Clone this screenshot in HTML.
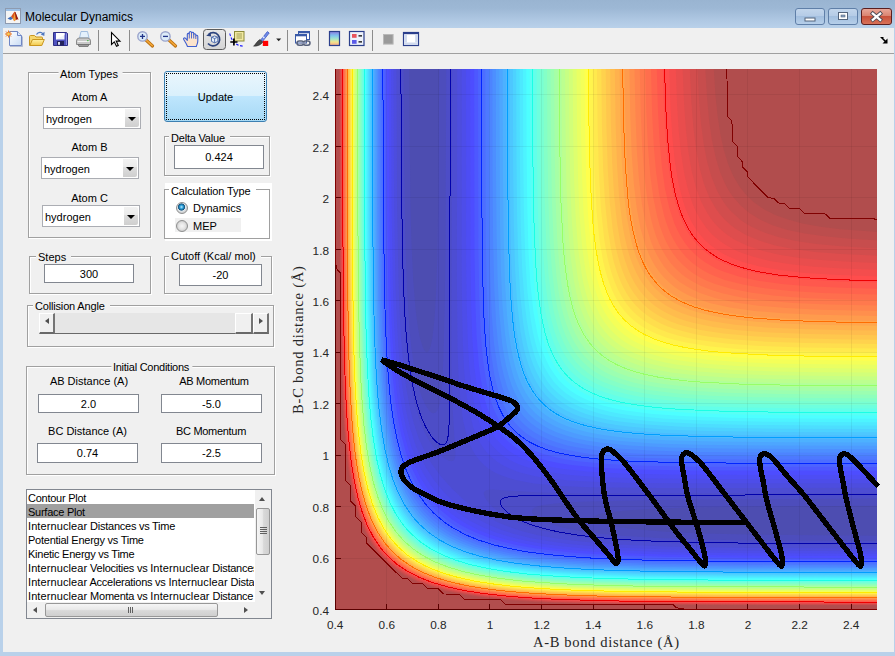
<!DOCTYPE html>
<html><head><meta charset="utf-8"><title>Molecular Dynamics</title>
<style>
html,body{margin:0;padding:0;}
body{width:895px;height:656px;overflow:hidden;position:relative;background:#f0f0f0;font-family:"Liberation Sans",sans-serif;font-size:11px;color:#000;}
.abs{position:absolute;}
#titlebar{left:0;top:0;width:895px;height:28px;background:linear-gradient(#99b4d1 0%,#9db8d5 30%,#b0c9e4 75%,#b9d1ea 100%);}
#title{left:25px;top:9px;font-size:12px;line-height:16px;color:#000;font-family:"Liberation Sans",sans-serif;}
#bl{left:0;top:28px;width:3px;height:628px;background:#b9d1ea;}
#br{left:894px;top:28px;width:1px;height:628px;background:#b9d1ea;}
#bb{left:0;top:652px;width:895px;height:4px;background:#b9d1ea;}
#toolbar{left:3px;top:28px;width:891px;height:25px;background:#f0f0f0;border-bottom:1px solid #a0a0a0;}
.panel{position:absolute;border:1px solid #fff;box-sizing:border-box;}
.panel:before{content:"";position:absolute;left:-2px;top:-2px;right:0;bottom:0;border:1px solid #a0a0a0;}
.ptitle{position:absolute;top:-6px;background:#f0f0f0;padding:0 5px 0 2px;line-height:13px;white-space:nowrap;}
.edit{position:absolute;box-sizing:border-box;border:1px solid #828790;background:#fff;text-align:center;}
.lbl{position:absolute;white-space:nowrap;transform:translateX(-50%);line-height:13px;}
.pop{position:absolute;box-sizing:border-box;border:1px solid #abadb3;background:#fff;}
.pop span{position:absolute;left:2px;top:5px;line-height:13px;}
.pop i{position:absolute;right:1px;top:1px;bottom:1px;width:14px;border-radius:0 2px 2px 0;background:linear-gradient(#f2f2f2 0%,#ebebeb 45%,#dddddd 46%,#cfcfcf 100%);}
.pop i:after{content:"";position:absolute;left:3px;top:8px;border:4px solid transparent;border-top:4.5px solid #000;border-bottom:0;}

#upd{left:164px;top:71px;width:103px;height:51px;box-sizing:border-box;border:1px solid #3c7fb1;border-radius:3px;background:linear-gradient(#eaf6fd 0%,#d9f0fc 49%,#bee6fd 50%,#a7d9f5 100%);text-align:center;line-height:50px;}
#upd:after{content:"";position:absolute;left:1px;top:1px;right:1px;bottom:1px;border:1px dotted #000;}
.radio{position:absolute;width:12px;height:12px;box-sizing:border-box;border:1px solid #8e8f8f;border-radius:50%;background:radial-gradient(circle at 50% 50%,#f6f6f6 0,#e4e4e4 45%,#cfcfcf 70%);}
.radio.on{background:radial-gradient(circle at 45% 40%,#bfeaff 0,#2a9fd8 22%,#16507a 40%,#dfe8ee 48%,#d0d0d0 70%);}

#slider{left:39px;top:313px;width:230px;height:21px;background:#e6e6e6;border-bottom:1px solid #696969;box-sizing:border-box;}
#slider b{position:absolute;top:0;height:21px;box-sizing:border-box;background:#f0f0f0;border-left:1px solid #fff;border-top:1px solid #fff;border-right:2px solid #747474;border-bottom:2px solid #696969;}
#slider .sl{left:0;width:16px;} #slider .sr{left:214px;width:16px;} #slider .th{left:196px;width:18px;}
#slider .sl:after{content:"";position:absolute;left:4.5px;top:4px;border:3.7px solid transparent;border-right:4.5px solid #505050;border-left:0;}
#slider .sr:after{content:"";position:absolute;left:5px;top:4px;border:3.7px solid transparent;border-left:4.5px solid #505050;border-right:0;}

#list{left:26px;top:489px;width:246px;height:130px;box-sizing:border-box;border:1px solid #828790;background:#fff;overflow:hidden;}
#items{position:absolute;left:0;top:0px;width:227px;height:112px;overflow:hidden;letter-spacing:-0.25px;}
.it{height:14px;line-height:16px;padding-left:1px;white-space:nowrap;overflow:hidden;}
.it.sel{background:#a0a0a0;}
#vs{position:absolute;left:228px;top:0;width:16px;height:112px;background:#f0f0f0;}
#hs{position:absolute;left:0;top:112px;width:244px;height:16px;background:#f0f0f0;}
#vs .vth{position:absolute;left:0.5px;top:18px;width:14px;height:47px;box-sizing:border-box;border:1px solid #979797;border-radius:2px;background:linear-gradient(90deg,#f5f5f5 0%,#e9e9e9 45%,#d9d9d9 55%,#cfcfcf 100%);}
#vs .vth:after{content:"";position:absolute;left:3px;top:18px;width:7px;height:1px;background:#606060;box-shadow:0 2px 0 #606060,0 4px 0 #606060,0 6px 0 #606060;}
#vs .up{position:absolute;left:4px;top:7px;border:3.5px solid transparent;border-bottom:4px solid #505050;border-top:0;}
#vs .dn{position:absolute;left:4px;top:101px;border:3.5px solid transparent;border-top:4px solid #505050;border-bottom:0;}
#hs .hth{position:absolute;left:18px;top:1px;width:173px;height:14px;box-sizing:border-box;border:1px solid #979797;border-radius:2px;background:linear-gradient(#f5f5f5 0%,#e9e9e9 45%,#d9d9d9 55%,#cfcfcf 100%);}
#hs .hth:after{content:"";position:absolute;left:82px;top:3px;width:1px;height:6px;background:#606060;box-shadow:2px 0 0 #606060,4px 0 0 #606060;}
#hs .lf{position:absolute;left:6px;top:4.5px;border:3.5px solid transparent;border-right:4px solid #505050;border-left:0;}
#hs .rt{position:absolute;left:217px;top:4.5px;border:3.5px solid transparent;border-left:4px solid #505050;border-right:0;}
</style></head><body>
<div id="titlebar" class="abs"></div>
<div id="title" class="abs">Molecular Dynamics</div>
<div id="bl" class="abs"></div><div id="br" class="abs"></div><div id="bb" class="abs"></div>
<div id="toolbar" class="abs"></div>
<svg class="abs" style="left:0;top:0" width="895" height="56" viewBox="0 0 895 56">
<defs>
<linearGradient id="gpaper" x1="0" y1="0" x2="1" y2="1"><stop offset="0" stop-color="#fff"/><stop offset="1" stop-color="#c9dcf5"/></linearGradient>
<linearGradient id="gfold" x1="0" y1="0" x2="0" y2="1"><stop offset="0" stop-color="#fff2a8"/><stop offset="1" stop-color="#f2c84a"/></linearGradient>
<linearGradient id="gcb" x1="0" y1="0" x2="0" y2="1"><stop offset="0" stop-color="#8a7be0"/><stop offset="0.3" stop-color="#7fc4ee"/><stop offset="0.55" stop-color="#a8e6c8"/><stop offset="0.75" stop-color="#f3e58a"/><stop offset="1" stop-color="#f0a08a"/></linearGradient>
<linearGradient id="gbtn" x1="0" y1="0" x2="0" y2="1"><stop offset="0" stop-color="#e8e8e8"/><stop offset="1" stop-color="#d4d4d4"/></linearGradient>
<linearGradient id="gmin" x1="0" y1="0" x2="0" y2="1"><stop offset="0" stop-color="#c3d6ec"/><stop offset="0.5" stop-color="#b4cbe6"/><stop offset="0.5" stop-color="#a3bfdf"/><stop offset="1" stop-color="#b7d0ea"/></linearGradient>
<linearGradient id="gcls" x1="0" y1="0" x2="0" y2="1"><stop offset="0" stop-color="#e9a99b"/><stop offset="0.5" stop-color="#d9806c"/><stop offset="0.5" stop-color="#c8513a"/><stop offset="1" stop-color="#d9735a"/></linearGradient>
</defs>
<!-- window buttons -->
<g>
<rect x="795.5" y="8.5" width="29" height="16" rx="2.5" fill="url(#gmin)" stroke="#5f7fa8"/>
<rect x="805" y="18" width="10" height="3" fill="#fff" stroke="#53647c" stroke-width="1"/>
<rect x="828.5" y="8.5" width="29" height="16" rx="2.5" fill="url(#gmin)" stroke="#5f7fa8"/>
<rect x="838.5" y="12.5" width="9" height="7" fill="#fff" stroke="#53647c" stroke-width="1"/>
<rect x="841" y="15" width="4" height="2" fill="#8aa3c4" stroke="#53647c" stroke-width="0.6"/>
<rect x="861.5" y="8.5" width="30" height="16" rx="2.5" fill="url(#gcls)" stroke="#5a1f1f"/>
<path d="M872.8,13.6L880.2,19.8M880.2,13.6L872.8,19.8" stroke="#4a4a55" stroke-width="4" stroke-linecap="square"/>
<path d="M872.8,13.6L880.2,19.8M880.2,13.6L872.8,19.8" stroke="#fff" stroke-width="2.3" stroke-linecap="square"/>
</g>
<!-- matlab logo icon -->
<g>
<rect x="5.5" y="8.5" width="15" height="15" fill="#f4f4f4" stroke="#8e9bb0"/>
<rect x="6" y="9" width="14" height="2" fill="#9cc0e6"/>
<path d="M7.5,18.5L11,16.5L13,18.8L10.5,20Z" fill="#3a6ab8"/>
<path d="M11,16.5C13,14.5 13.8,11.8 14.8,11.8C15.8,11.8 16.8,16.5 18.5,19.5C17,18.8 16,19.5 14.2,21.2C13.6,20.2 13.3,19.4 13,18.8Z" fill="#d9541e"/>
<path d="M14.8,11.8C15.8,11.8 16.8,16.5 18.5,19.5C17.3,18.9 16.6,19.2 15.8,19.8C15.6,17 15.3,14 14.8,11.8Z" fill="#8e1b12"/>
<path d="M13,18.8C13.6,17.6 14.3,15 14.8,13C15.1,15.5 15.4,18 15.8,19.8L14.2,21.2Z" fill="#f2a13a"/>
</g>
<!-- new -->
<path d="M9.5,31.5H17.5L21.5,35.5V45.5H9.5Z" fill="url(#gpaper)" stroke="#6f86c4"/>
<path d="M17.5,31.5V35.5H21.5" fill="#dfe9fa" stroke="#6f86c4"/>
<path d="M10,46.5H22.5V36.5" fill="none" stroke="#9aa6c6" stroke-opacity="0.7"/>
<g stroke="#e8772a" stroke-width="1"><path d="M8.5,30.5V37.5M5,34H12M6,31.5L11,36.5M11,31.5L6,36.5"/></g>
<circle cx="8.5" cy="34" r="1.8" fill="#f6d35a" stroke="#e8772a" stroke-width="0.8"/>
<!-- open -->
<path d="M29.5,45.5V36.5Q29.5,35.5 30.5,35.5H34.5L36,37H41.5Q42.5,37 42.5,38V39.5" fill="#f6d66c" stroke="#c9961f"/>
<path d="M29.8,45.5L32.5,39.5H44.3L41.8,45.5Z" fill="url(#gfold)" stroke="#c9961f"/>
<path d="M36.5,34.5C38,32 41.5,31.5 43,34" fill="none" stroke="#4f78c0" stroke-width="1.3"/>
<path d="M44.6,31.8L44.3,36L40.8,34.6Z" fill="#4f78c0"/>
<!-- save -->
<path d="M53.5,32.5H66.5L67.5,33.5V45.5H53.5Z" fill="#4f53c0" stroke="#2f2f86"/>
<rect x="56" y="33" width="8.5" height="6.5" fill="#eef2fb"/>
<path d="M56,33H64.5V35L56,39.5Z" fill="#fff"/>
<rect x="57" y="41" width="7" height="4.5" fill="#23235c"/>
<rect x="58" y="42" width="2" height="2.8" fill="#d8dcf0"/>
<path d="M66.5,33.5V45" stroke="#8a8ee0" stroke-width="1"/>
<!-- print -->
<path d="M79.5,38L81,31.5H87.5L89,38Z" fill="#e4f0fb" stroke="#8fb0d8" stroke-width="0.8"/>
<path d="M76.5,41Q76.5,38.5 79,38H88Q90.5,38.5 90.5,41V44.5H76.5Z" fill="#c9c9c9" stroke="#8a8a8a"/>
<path d="M77.5,41.5H89.5" stroke="#f4f4f4"/>
<path d="M78,44.5H89L88,46.5H79Z" fill="#9a9a9a" stroke="#6e6e6e" stroke-width="0.8"/>
<rect x="87" y="40" width="1.6" height="1.2" fill="#5cb85c"/>
<!-- separators -->
<g stroke="#8c8c8c" stroke-width="1" shape-rendering="crispEdges"><path d="M98.5,30V51M129.5,30V51M287.5,30V51M318.5,30V51M372.5,30V51"/></g>
<!-- pointer -->
<path d="M111.5,32.5V44.5L114.3,41.8L116.5,46.3L118.3,45.4L116.2,41.1H120Z" fill="#fff" stroke="#000" stroke-width="1.1" stroke-linejoin="miter"/>
<!-- zoom in -->
<path d="M146,40L152.5,46" stroke="#b96f10" stroke-width="3.2" stroke-linecap="round"/>
<path d="M146,40L152.3,45.7" stroke="#f3a638" stroke-width="1.6" stroke-linecap="round"/>
<circle cx="142.5" cy="36.4" r="4.7" fill="#dcebf8" stroke="#9aa4cc" stroke-width="1.4"/>
<path d="M140,36.4H145M142.5,33.9V38.9" stroke="#23358a" stroke-width="1.3"/>
<!-- zoom out -->
<path d="M169,40L175.5,46" stroke="#b96f10" stroke-width="3.2" stroke-linecap="round"/>
<path d="M169,40L175.3,45.7" stroke="#f3a638" stroke-width="1.6" stroke-linecap="round"/>
<circle cx="165.4" cy="36.4" r="4.7" fill="#dcebf8" stroke="#9aa4cc" stroke-width="1.4"/>
<path d="M163,36.4H168" stroke="#23358a" stroke-width="1.3"/>
<!-- hand -->
<path d="M187.5,46.5C186.5,43.5 184.5,41 183.6,39.2C183.2,38 184.6,37.4 185.6,38.4L187.3,40.3V34.3C187.3,33 189.2,33 189.3,34.3V32.6C189.4,31.2 191.4,31.2 191.5,32.6V33.2C191.6,31.9 193.6,31.9 193.7,33.2V34.6C193.8,33.4 195.7,33.4 195.8,34.7V36C195.9,35 197.8,35 197.8,36.4V41C197.8,43.5 196.8,44.5 196.3,46.5Z" fill="#fbe3cc" stroke="#3f5fd0" stroke-width="1.1" stroke-linejoin="round"/>
<path d="M189.3,34.3V38.5M191.5,33.2V38.5M193.7,34.6V38.5M195.8,36V39" stroke="#3f5fd0" stroke-width="0.9" fill="none"/>
<!-- rotate (pressed) -->
<rect x="203.5" y="29.5" width="22" height="20" rx="3" fill="url(#gbtn)" stroke="#5c5c5c"/>
<path d="M208.8,34.2A6.6,6.6 0 1 1 208,43.5" fill="none" stroke="#2d447f" stroke-width="1.7"/>
<path d="M206.2,35.8L210.6,32.2L211.2,36.6Z" fill="#2d447f"/>
<path d="M211.5,37.2L214.5,36L217.8,37.2V41.4L214.6,42.8L211.5,41.4Z" fill="#e6f0fb" stroke="#4a66a8" stroke-width="0.9"/>
<path d="M211.5,37.2L214.6,38.5L217.8,37.2M214.6,38.5V42.8" fill="none" stroke="#4a66a8" stroke-width="0.9"/>
<!-- data cursor -->
<rect x="234.5" y="31.5" width="9.5" height="9.5" fill="#f0e8a0" stroke="#8c8a3a"/>
<path d="M236.5,34H242M236.5,36H242M236.5,38H242" stroke="#9a9850" stroke-width="0.9"/>
<path d="M229.8,33.5C230.5,37 232,40 234,42.2C236.5,44.8 240,46 244,46.2" fill="none" stroke="#1a1aff" stroke-width="1.1" stroke-dasharray="2.6,1.6"/>
<path d="M230.3,42H237.5M233.9,38.4V45.6" stroke="#000" stroke-width="1.7"/>
<!-- brush -->
<path d="M260.5,40.2L267.4,31.6L269.2,33L262.4,41.6Z" fill="#6f8be8" stroke="#3b55c0" stroke-width="0.8"/>
<path d="M262.6,36.5L264.4,38" stroke="#e9eefc" stroke-width="1.2"/>
<path d="M259.8,39.6L262.8,42C261.5,44.5 258,46.3 253.6,46.2C255.6,44.6 256.6,41.5 259.8,39.6Z" fill="#4a4a4a" stroke="#2a2a2a" stroke-width="0.6"/>
<rect x="262.8" y="40.8" width="5.4" height="5.2" fill="#f00"/>
<path d="M276.2,38.5H281.2L278.7,41.2Z" fill="#222"/>
<!-- link -->
<rect x="298.5" y="31.5" width="11" height="8" fill="#fff" stroke="#3a5aa8"/>
<path d="M298.5,32.5H309.5" stroke="#3a5aa8" stroke-width="1.6"/>
<rect x="295.5" y="34.5" width="11" height="8.5" fill="#fff" stroke="#3a5aa8"/>
<path d="M295.5,35.5H306.5" stroke="#3a5aa8" stroke-width="1.6"/>
<rect x="297" y="41" width="6.6" height="4.2" rx="2.1" fill="none" stroke="#56607a" stroke-width="1.5"/>
<rect x="303.4" y="41" width="6.6" height="4.2" rx="2.1" fill="none" stroke="#56607a" stroke-width="1.5"/>
<path d="M300.5,43.1H306.5" stroke="#8e98b4" stroke-width="1.4"/>
<!-- colorbar -->
<rect x="329.5" y="31.5" width="10" height="14" fill="url(#gcb)" stroke="#2b3f8c" stroke-width="1.2"/>
<!-- legend -->
<rect x="349.5" y="31.5" width="14.5" height="14" fill="#eef2fb" stroke="#2b3f8c" stroke-width="1.2"/>
<rect x="352" y="34" width="4.6" height="3.8" fill="#e8545c"/>
<rect x="352" y="40" width="4.6" height="3.8" fill="#5a5ae8"/>
<path d="M358.5,35.8H362M358.5,41.8H362" stroke="#000" stroke-width="1.2"/>
<!-- hide tools -->
<rect x="383.5" y="34.5" width="9.6" height="9.6" fill="#9a9a9a" stroke="#b9b9b9"/>
<!-- show tools -->
<rect x="403.5" y="32.5" width="15" height="13" fill="#fff" stroke="#2b3f8c" stroke-width="1.2"/>
<path d="M403.5,33.3H418.5" stroke="#2b3f8c" stroke-width="1.8"/>
<rect x="404.3" y="34.5" width="2.6" height="8" fill="#cfd9ee"/><rect x="415.2" y="34.5" width="2.6" height="8" fill="#cfd9ee"/>
<rect x="404.3" y="42.5" width="13.5" height="2.4" fill="#cfd9ee"/>
<!-- dock arrow -->
<path d="M881.5,37.5L886.5,42.5" stroke="#000" stroke-width="1.6"/><path d="M887.5,38.5V43.5H882.5Z" fill="#000"/>
<path d="M880.5,37.5H883.5" stroke="#000" stroke-width="1"/>
</svg>

<div class="panel" style="left:29px;top:73px;width:123px;height:166px"><div class="ptitle" style="top:-6px;left:50%;transform:translateX(-50%)">Atom Types</div></div>
<div class="lbl" style="left:89.5px;top:91px">Atom A</div>
<div class="pop" style="left:43px;top:107px;width:98px;height:22px"><span>hydrogen</span><i></i></div>
<div class="lbl" style="left:89.5px;top:141px">Atom B</div>
<div class="pop" style="left:41px;top:157px;width:98px;height:22px"><span>hydrogen</span><i></i></div>
<div class="lbl" style="left:89.5px;top:192px">Atom C</div>
<div class="pop" style="left:42px;top:205px;width:98px;height:22px"><span>hydrogen</span><i></i></div>
<div id="upd" class="abs">Update</div>
<div class="panel" style="left:165px;top:137px;width:106px;height:40px"><div class="ptitle" style="top:-6px;left:3px;letter-spacing:-0.2px">Delta Value</div></div>
<div class="edit" style="left:174px;top:145px;width:90px;height:24px;line-height:23px">0.424</div>
<div class="abs" style="left:165px;top:183px;width:107px;height:58px;background:#fff"></div>
<div class="panel" style="left:165px;top:190px;width:106px;height:50px"><div class="ptitle" style="top:-6px;left:3px;background:#fff;letter-spacing:-0.1px">Calculation Type</div></div>
<div class="abs" style="left:175px;top:218px;width:66px;height:14px;background:#f0f0f0"></div>
<div class="radio on" style="left:176px;top:202px"></div><div class="abs" style="left:193px;top:202px;line-height:13px">Dynamics</div>
<div class="radio" style="left:176px;top:220px"></div><div class="abs" style="left:193px;top:220px;line-height:13px">MEP</div>
<div class="panel" style="left:30px;top:257px;width:122px;height:38px"><div class="ptitle" style="top:-7px;left:5px">Steps</div></div>
<div class="edit" style="left:44px;top:264px;width:90px;height:19px;line-height:18px">300</div>
<div class="panel" style="left:165px;top:257px;width:108px;height:38px"><div class="ptitle" style="top:-8px;left:3px">Cutoff (Kcal/ mol)</div></div>
<div class="edit" style="left:179px;top:264px;width:83px;height:22px;line-height:21px">-20</div>
<div class="panel" style="left:28px;top:306px;width:247px;height:42px"><div class="ptitle" style="top:-7px;left:4px;letter-spacing:-0.17px">Collision Angle</div></div>
<div id="slider" class="abs"><b class="sl"></b><b class="th"></b><b class="sr"></b></div>
<div class="panel" style="left:27px;top:367px;width:249px;height:109px"><div class="ptitle" style="top:-7px;left:50%;transform:translateX(-50%);letter-spacing:-0.25px;padding:0 3px 0 2px">Initial Conditions</div></div>
<div class="lbl" style="left:89.0px;top:375px">AB Distance (A)</div>
<div class="lbl" style="left:214.0px;top:375px;letter-spacing:-0.3px">AB Momentum</div>
<div class="edit" style="left:38px;top:394px;width:101px;height:19px;line-height:18px">2.0</div>
<div class="edit" style="left:161px;top:394px;width:101px;height:19px;line-height:18px">-5.0</div>
<div class="lbl" style="left:87.5px;top:425px">BC Distance (A)</div>
<div class="lbl" style="left:211.0px;top:425px;letter-spacing:-0.3px">BC Momentum</div>
<div class="edit" style="left:37px;top:443px;width:101px;height:20px;line-height:19px">0.74</div>
<div class="edit" style="left:161px;top:443px;width:101px;height:20px;line-height:19px">-2.5</div>
<div id="list" class="abs"><div id="items"><div class="it">Contour Plot</div><div class="it sel">Surface Plot</div><div class="it"><span style="letter-spacing:0.1px">Internuclear</span> Distances vs Time</div><div class="it">Potential Energy vs Time</div><div class="it">Kinetic Energy vs Time</div><div class="it"><span style="letter-spacing:0.1px">Internuclear</span> Velocities vs <span style="letter-spacing:0.1px">Internuclear</span> Distances</div><div class="it"><span style="letter-spacing:0.1px">Internuclear</span> Accelerations vs <span style="letter-spacing:0.1px">Internuclear</span> Distances</div><div class="it"><span style="letter-spacing:0.1px">Internuclear</span> Momenta vs <span style="letter-spacing:0.1px">Internuclear</span> Distance</div></div><div id="vs"><b class="up"></b><b class="vth"></b><b class="dn"></b></div><div id="hs"><b class="lf"></b><b class="hth"></b><b class="rt"></b></div></div>
<svg class="abs" style="left:0;top:0" width="895" height="656" viewBox="0 0 895 656">
<g fill-rule="evenodd" shape-rendering="geometricPrecision"><rect x="335.2" y="69" width="541.8" height="540.5" fill="#4d4db1"/>
<path fill="#4d4dbc" d="M335.2,609.5L877,609.5 877,535.7 746.7,534.5 704.1,533.5 665.4,531.7 637.1,529.4 622.9,527.7 611.8,525.9 606,524.6 597.8,522 595.2,520.7 593.6,519.4 593.1,518.1 593.6,516.8 595.8,515.4 599.6,514.1 607.4,512.5 625.9,510.4 652.5,508.8 687.4,507.6 737.7,506.7 877,505.8 877,69 439.2,69 438.2,208 437.3,258.2 436.1,292.9 434.5,319.5 432.4,338 430.8,345.7 429.5,349.5 428.1,351.7 426.8,352.3 425.5,351.7 424.2,350.1 422.9,347.6 420.3,339.4 419,333.5 417.2,322.5 415.5,308.4 413.2,280.1 411.4,241.4 410.3,199 409.2,69 335.2,69 335.2,609.5Z"/>
<path fill="#4d4dc7" d="M335.2,609.5L877,609.5 877,541.1 777.7,540.6 710.6,539.7 657.7,538 617.7,535.5 598.4,533.6 580.3,531 566.8,528.4 556.6,525.9 548.7,523.3 539.9,519.4 534.3,515.6 532.3,513 531.9,511.7 532.1,510.4 532.8,509.1 534.4,507.8 537.1,506.5 542.9,505 559.7,502.9 585.5,501.6 631.9,500.4 693.8,499.5 877,498.6 877,69 446.3,69 445.4,251.7 444.6,313.5 443.4,359.8 442,385.6 440,402.3 438.4,408.1 437.1,410.8 435.8,412.4 434.5,413.1 433.2,413.2 431.9,412.9 429.4,410.9 425.5,405.3 421.6,396.5 419,388.6 416.5,378.4 413.9,365 411.3,346.9 409.4,327.7 406.9,287.8 405.2,235 404.2,168.1 403.7,69 335.2,69 335.2,609.5Z"/>
<path fill="#4d4dd2" d="M335.2,609.5L877,609.5 877,545.2 753.2,544.5 675.8,543.2 646.1,542.1 619,540.7 594.7,538.7 576.4,536.6 556.8,533.6 539.3,529.7 526.4,525.9 513.5,520.7 501.8,514.3 493.4,507.8 489.5,504 486.5,500.1 484.4,496.3 483.8,493.7 483.9,492.4 484.7,491.1 486.1,490.3 488.7,489.7 492.6,489.5 539,492.5 584.2,493.6 877,492.9 877,69 452.1,69 451.4,361.1 452.5,406.2 455.4,452.5 455.3,456.4 454.7,458.9 453.9,460.3 452.6,461.1 451.3,461.3 448.7,460.7 444.8,458.6 441,455.6 437.1,451.7 430.7,443.3 424.2,431.7 419,418.8 415.2,405.9 411.3,388.5 408.2,368.8 406.1,350.6 404.2,326.4 402.7,299.4 401.7,269.8 400.3,192.5 399.7,69 335.2,69 335.2,609.5Z"/>
<path fill="#4d4dde" d="M335.2,609.5L877,609.5 877,548.5 750.6,547.9 673.2,546.7 616.4,544.4 591.9,542.6 573.9,540.8 554.5,538.2 536.7,534.9 521.3,531 509.5,527.1 497,522 484.9,515.6 473.5,507.8 464,500.1 451.8,488.5 441,476.5 431.9,464.2 425.5,453.3 419,439.1 413.9,423.8 410,408.5 406.3,388.2 403.6,367.2 401.3,341.8 399.7,314.9 398.5,282.6 397,202.8 396.4,69 335.2,69 335.2,609.5ZM588.7,487.2L660.3,488.1 877,487.8 877,69 457.2,69 456.9,281.3 457.6,352.1 458.8,380.4 460.7,403.6 463.3,421.6 467.2,437.1 469.5,443.5 472.5,449.9 475.8,455.5 479.7,460.6 483.5,464.5 488.7,468.7 493.9,471.9 500.3,475 508.1,477.8 515.8,480 533.9,483.4 557.1,485.7 588.7,487.2Z"/>
<path fill="#4d4de9" d="M335.2,609.5L877,609.5 877,551.3 749.3,550.8 670.6,549.6 613.8,547.5 590.6,546 568.4,543.9 548.9,541.3 530,537.9 513.2,533.7 500.8,529.7 488.3,524.6 475.9,518.1 464.2,510.4 454.6,502.7 443.6,491.8 434.5,480.8 426.8,469.1 420.3,456.8 415.2,444.3 410,427.7 406.1,411 402.6,389.4 400.2,368.8 398.3,347 396.8,319.9 395.5,286.5 394.1,204.1 393.5,69 335.2,69 335.2,609.5ZM599.9,482.1L633.2,482.9 677,483.3 877,483.2 877,69 461.8,69 461.7,265.9 462.1,309.7 462.8,341.8 464.1,370.1 466.3,393.3 469.4,412.6 473.5,428 476.5,435.8 479.7,442.1 483.5,448.2 487.4,453 492,457.6 497.7,462.1 504.2,466 510.6,469.1 518.4,471.9 526.1,474.1 535.1,476.2 545.5,477.9 568.7,480.4 599.9,482.1Z"/>
<path fill="#4d4df4" d="M335.2,609.5L877,609.5 877,553.8 746.7,553.3 666.7,552.2 608.7,550 585.5,548.5 563.2,546.4 543.5,543.9 524.8,540.5 509.4,536.8 495,532.3 482.3,527.1 469.8,520.7 458,513 448.7,505.4 439.6,496.3 430.7,485.2 422.9,473 416.5,459.9 411.3,446.4 406.4,429.3 402.6,411.3 399.7,392.7 397.2,370.1 395.5,348.3 394,321.2 392.9,287.8 391.6,205.4 391,69 335.2,69 335.2,609.5ZM636.3,478.2L709.3,478.9 877,478.9 877,69 466.1,69 466.2,259.5 466.7,304.5 467.7,339.2 469.4,368.8 472.1,392 473.9,402.3 475.9,411.3 478.1,419 481,426.8 484.7,434.5 488.6,440.9 492.6,446.1 497.7,451.3 502.9,455.5 509.4,459.7 517.1,463.5 524.8,466.5 533.9,469.1 544.2,471.4 567.4,474.7 597.1,476.9 636.3,478.2Z"/>
<path fill="#4d4dff" d="M335.2,609.5L877,609.5 877,556.1 742.8,555.6 662.9,554.5 604.8,552.4 580.3,550.8 559.7,548.9 540.3,546.4 521,543 504.2,539 490.9,534.9 478,529.7 465.4,523.3 455.2,516.7 444.9,508.4 435.4,498.8 426.8,487.7 420.1,476.9 413.9,464.1 408.6,449.9 403.6,431.9 399.7,412.7 397.1,395.2 394.7,372.7 393.1,350.8 391.7,323.8 390.5,290.3 389.3,208 388.7,69 335.2,69 335.2,609.5ZM668.6,474.4L737.7,474.8 877,474.8 877,69 470.2,69 470.5,256.9 471.1,303.2 472.3,338 474.4,367.6 477.5,390.7 479.6,401 481.9,410 484.5,417.8 487.9,425.5 492.2,433.2 496.4,439.2 501.6,444.8 507.6,449.9 514.5,454.5 521,457.8 530,461.5 539,464.2 548,466.3 559.7,468.4 586.8,471.5 621.6,473.4 668.6,474.4Z"/>
<path fill="#4d58ff" d="M335.2,609.5L877,609.5 877,558.2 746.7,557.7 664.2,556.7 602.2,554.5 576.4,552.9 557.1,551.1 536.4,548.5 517.2,545.2 500.9,541.3 488.2,537.4 475,532.3 462.2,525.9 452.1,519.4 442.3,511.6 433.2,502.6 424.3,491.1 417.8,480.5 411.3,467 406.1,452.9 401.4,435.8 397.8,417.8 394.8,397.2 392.5,375.3 390.7,350 389.4,323.5 388.3,290.3 387.1,205.4 386.6,69 335.2,69 335.2,609.5ZM690.3,470.5L877,470.8 877,69 474.2,69 474.5,253 475.3,300.6 476.6,335.4 478.9,365 480.6,377.9 482.6,389.4 484.9,399.7 487.4,408.1 490.6,416.5 493.9,423.3 498.4,430.6 502.9,436.4 508.1,441.6 514.5,446.7 521.9,451.2 530,455 539,458.3 548,460.8 559.7,463.2 571.3,465 599.6,467.8 638.4,469.6 690.3,470.5Z"/>
<path fill="#4d63ff" d="M335.2,609.5L877,609.5 877,560.1 740.3,559.6 657.7,558.6 598.4,556.5 573.9,554.9 552,552.9 531.9,550.3 513.2,547 497.7,543.3 482.8,538.7 470.1,533.6 457.8,527.2 447.8,520.7 438.4,513 429.4,503.6 421.6,493.5 414.8,482.1 408.7,469 403.6,454.4 399.6,439.6 395.8,421.2 392.7,399.7 390.7,380.1 388.8,354.7 387.4,326.4 386.4,294.2 385.2,210.6 384.7,69 335.2,69 335.2,609.5ZM696.7,466.7L877,467 877,69 478,69 478.4,250.5 479.2,296.8 480.6,331.5 483.1,361.1 486.7,384.3 489,394.6 491.7,403.6 494.7,411.3 498.4,419 502.9,426.3 508.1,432.7 513.2,437.7 519.7,442.7 527.4,447.4 535.1,451 544.2,454.2 554.5,457 566.1,459.4 577.7,461.2 607.4,464 644.8,465.7 696.7,466.7Z"/>
<path fill="#4d6eff" d="M335.2,609.5L877,609.5 877,561.9 741.5,561.5 657.7,560.4 595.8,558.3 571.3,556.7 550.6,554.9 530,552.3 511.1,549 495.2,545.3 481.9,541.3 468.7,536.1 456.5,530 445.9,523.3 436.4,515.6 426.8,505.6 419,495.3 412.6,484.4 406.3,470.5 401,455.1 397.1,440.1 393.3,420.3 390.7,401 388.5,379.1 386.8,354.5 385.5,326.9 384.5,292.9 383.4,208 382.9,69 335.2,69 335.2,609.5ZM692.5,462.8L758.3,463.2 877,463.3 877,69 481.7,69 482.2,245.3 483,291.6 484.5,326.4 487,356 490.5,379.1 492.9,389.4 495.5,398.4 498.4,406.2 502.1,413.9 506,420.3 510.8,426.8 515.8,432 522.2,437.4 529.8,442.2 537.6,446.1 546.8,449.5 555.8,452.2 566.1,454.6 577.7,456.6 590.6,458.2 606.1,459.7 643.5,461.7 692.5,462.8Z"/>
<path fill="#4d79ff" d="M335.2,609.5L877,609.5 877,563.6 739.4,563.2 655.1,562.1 595.8,560.1 571.3,558.6 549.3,556.7 528.4,554.2 510.6,551.2 495.1,547.7 478.4,542.7 465,537.4 452.6,531.1 442.7,524.6 433.3,516.8 424.7,507.8 417,497.5 410,485.4 404.5,473.1 399.7,459.2 395.6,443.5 392,425.1 389,403.6 386.8,381.9 385.2,358.6 383.9,331.5 382.9,298.1 381.7,210.6 381.2,69 335.2,69 335.2,609.5ZM684.5,458.9L753.2,459.6 877,459.7 877,69 485.3,69 485.8,240.2 486.7,286.5 488.2,321.2 490.7,350.8 494.2,374 496.5,384.3 499.1,393.3 502,401 505.5,408.6 509.4,415.3 514.5,422.3 520,428 526.1,433.2 532.6,437.4 540.3,441.5 548,444.6 557.1,447.5 567.4,450.1 577.7,452.1 590.6,453.9 604.8,455.5 639.6,457.7 684.5,458.9Z"/>
<path fill="#4d84ff" d="M335.2,609.5L877,609.5 877,565.2 736.4,564.8 652.5,563.7 593.2,561.7 568.7,560.2 545.5,558.2 524.8,555.6 508.5,552.9 491.3,549 477.1,544.8 464.2,539.8 451.7,533.6 441.6,527.1 431.9,519.3 422.9,509.9 415.2,499.6 408.7,488.5 402.4,474.4 397.3,458.9 393.2,442.9 389.8,424.2 387.2,404.9 385.2,384.3 383.4,358.6 381.2,298.1 380.1,213.1 379.6,69 335.2,69 335.2,609.5ZM676.1,455.1L746.7,455.9 877,456.2 877,69 488.9,69 489.4,235 490.3,280.1 491.7,314.8 494.1,344.4 497.5,367.6 499.7,377.9 502.2,386.9 504.8,394.6 508.2,402.3 512.4,410 516.9,416.5 522.2,422.5 527.4,427.2 533.9,431.9 540.5,435.8 548,439.2 557.1,442.5 567.4,445.4 577.7,447.6 602.2,451.1 634.5,453.6 676.1,455.1Z"/>
<path fill="#4d8fff" d="M335.2,609.5L877,609.5 877,566.7 736.4,566.3 652.5,565.3 589.3,563.2 566.1,561.7 544.2,559.8 523.5,557.3 505,554.2 488.7,550.5 475.2,546.4 461.8,541.3 450,535.4 439.1,528.4 429.7,520.7 421.1,511.7 413.4,501.4 406.7,489.8 401,476.9 395.8,461.6 392,446.3 388.3,426.8 385.6,406.2 383.4,383 381.8,358.6 379.6,298.1 378.6,213.1 378.1,69 335.2,69 335.2,609.5ZM767.5,452.5L877,452.7 877,69 492.4,69 492.6,177.1 493.1,241.4 494.3,289.1 496.2,323.8 497.6,339.2 499.4,353.4 501.6,365.9 504.1,376.6 507.2,386.9 510.6,395.7 514.5,403.3 518.8,410 523.9,416.5 530,422.4 536.4,427.3 544.2,431.9 552.6,435.8 562.2,439.2 573.9,442.3 586.4,444.8 599.6,446.7 613.8,448.2 650,450.5 697.7,451.9 767.5,452.5Z"/>
<path fill="#4d9bff" d="M335.2,609.5L877,609.5 877,568.1 736.4,567.7 651.2,566.7 588,564.7 563.7,563.2 542.9,561.4 522.2,558.9 502.9,555.6 486.1,551.8 472.6,547.7 459.3,542.6 447.4,536.6 437.1,529.9 428.1,522.5 420.1,514.3 412.3,504 405.5,492.4 399.7,479.5 394.5,464.3 390.7,449.2 386.9,429.3 384.2,409.4 382.1,386.9 380.4,361.2 378.2,300.6 377.1,214.4 376.7,69 335.2,69 335.2,609.5ZM719.8,448.6L877,449.2 877,69 495.9,69 496,170.7 496.6,233.7 497.6,278.8 499.3,313.5 502.1,343.1 503.9,354.7 506.1,366.3 508.8,376.6 511.7,385.6 515,393.3 519.1,401 523.5,407.7 528.8,413.9 535.1,419.8 541.6,424.5 549.3,428.9 557.1,432.4 566.1,435.6 576.4,438.4 588,440.8 599.6,442.6 629.3,445.6 668,447.6 719.8,448.6Z"/>
<path fill="#4da6ff" d="M335.2,609.5L877,609.5 877,569.5 736.4,569.1 651.2,568.2 589.3,566.2 563.5,564.7 542.9,562.9 522.7,560.6 504.2,557.6 488,554.2 471.9,549.6 459,544.7 446.8,538.7 436.6,532.3 426.8,524.4 418.2,515.6 410.5,505.3 403.8,493.7 398.4,481.7 393.3,466.7 389.3,451.2 385.6,431.9 382.8,411.3 380.7,389.4 379.1,364.9 377.8,336.2 376.8,301.9 375.7,215.7 375.3,69 335.2,69 335.2,609.5ZM697.9,444.8L764.8,445.5 877,445.8 877,69 499.3,69 500,226 500.9,271 502.5,305.8 505.2,335.4 508.8,358.6 511.3,368.8 513.9,377.9 516.8,385.6 520.4,393.3 524.8,400.7 529.9,407.5 535.1,412.9 540.9,417.8 546.8,421.8 554.5,426 563.5,429.8 572.6,432.8 582.9,435.4 593.2,437.5 606.1,439.4 620.3,441 653.8,443.4 697.9,444.8Z"/>
<path fill="#4db1ff" d="M335.2,609.5L877,609.5 877,570.8 736.4,570.4 651.2,569.5 588,567.5 562.2,566 541.6,564.3 520.5,561.9 502.9,559.1 485.9,555.5 470.6,551.1 457.8,546.3 444.9,540 434.5,533.4 425.2,525.9 416.5,516.8 408.8,506.5 402.3,495.2 397,483.4 392,468.6 388.1,453.7 384.2,433.3 381.4,412.6 379.3,390.7 377.8,367.3 376.5,338.9 375.5,303.2 374.4,215.7 374,69 335.2,69 335.2,609.5ZM783.4,442.2L877,442.4 877,69 502.7,69 502.9,172 503.6,235 504.9,281.3 507.1,316.1 508.7,331.5 510.5,344.4 512.9,357.3 515.4,367.6 518.8,377.9 522.2,386.1 526.1,393.4 531.3,401 536.9,407.5 542.9,412.9 549.7,417.8 558.4,422.5 567.4,426.3 576.5,429.3 588,432.2 599.8,434.5 612.5,436.3 628,437.9 665.4,440.3 713.2,441.6 783.4,442.2Z"/>
<path fill="#4dbcff" d="M335.2,609.5L877,609.5 877,572.1 733.8,571.7 648.7,570.8 585.5,568.8 559.7,567.3 539,565.5 518.4,563.1 499,560 482.3,556.2 466.8,551.6 453.5,546.4 442.3,540.7 431.9,534 422.9,526.6 413.9,516.9 406.5,506.5 400.1,495 394.6,482.1 389.6,466.7 385.9,451.2 382.8,434.5 380,412.6 377.8,389.4 376.3,366.3 375.1,338 374.2,303.2 373.1,215.7 372.7,69 335.2,69 335.2,609.5ZM729,438.3L877,439 877,69 506.1,69 506.3,165.5 506.9,226 508.1,271 509.9,304.5 512.8,332.8 514.6,344.4 516.9,356 519.6,366.3 522.7,375.3 526,383 530,390.3 534.6,397.2 540.2,403.6 545.8,408.7 552.8,413.9 559.7,417.8 568.7,421.9 577.7,425.1 588,427.9 599.6,430.3 611.3,432.2 640.9,435.2 678.3,437.2 729,438.3Z"/>
<path fill="#4dc7ff" d="M335.2,609.5L877,609.5 877,573.3 733.8,572.9 647.4,572 584.2,570 558.4,568.5 537.7,566.8 517.1,564.4 497.7,561.3 481,557.6 465.5,553 452,547.7 441,542.1 430.7,535.5 421.6,528 413.5,519.4 405.9,509.1 399.7,498.4 393.7,484.7 389,470.5 384.9,453.8 381.6,436.3 378.8,415.2 376.8,393.3 375.2,368.8 373.9,339.8 372.9,304.5 371.9,217 371.5,69 335.2,69 335.2,609.5ZM705.9,434.5L771.2,435.3 877,435.6 877,69 509.5,69 509.7,160.4 510.3,219.6 511.3,263.3 513,296.8 515.7,325.1 519.5,348.3 521.9,358.6 524.7,367.6 527.7,375.3 531.4,383 535.2,389.4 540.3,396.3 546,402.3 551.9,407.3 558.4,411.6 566.1,415.8 573.9,419.1 582.9,422.1 593.2,424.8 603.5,426.9 616.4,429 630.6,430.6 662.9,433 705.9,434.5Z"/>
<path fill="#4dd2ff" d="M335.2,609.5L877,609.5 877,574.4 732.5,574.1 646.1,573.1 582.9,571.2 557.1,569.7 536.4,568 515.8,565.6 495.2,562.2 478.4,558.5 464.2,554.3 450.7,549 439.7,543.5 429.4,536.8 420.3,529.4 412.1,520.7 404.5,510.4 398,498.8 392.4,486 387.7,471.8 383.6,455.1 380.4,437.2 377.6,416.5 375.5,393.3 373.9,368.7 371.8,305.8 370.7,218.3 370.3,69 335.2,69 335.2,609.5ZM766.3,431.9L877,432.3 877,69 512.9,69 513.1,164.2 513.8,224.7 515.1,269.8 517.2,303.2 520.5,331.5 522.6,343.1 525.3,354.7 528.1,363.7 531.6,372.7 535.4,380.4 540.2,388.2 545.5,394.7 551.9,400.9 558.4,405.9 565.2,410 573.9,414.2 582.9,417.5 593.2,420.5 604.8,423.1 616.4,425 630.6,426.8 664.2,429.4 706.7,431 766.3,431.9Z"/>
<path fill="#4ddeff" d="M335.2,609.5L877,609.5 877,575.6 731.2,575.2 644.8,574.3 581.6,572.3 556.4,570.9 535.1,569.1 513.2,566.6 493.9,563.4 477.1,559.7 462.9,555.5 449.6,550.3 438.4,544.7 428.1,538.1 419,530.6 410.9,522 403.3,511.7 397.1,500.9 391.2,487.2 386.8,474 382.7,457.6 379.2,438.3 376.5,417.8 374.3,394.6 372.7,368.8 370.6,307.1 369.6,219.6 369.2,69 335.2,69 335.2,609.5ZM728.9,428L786.7,428.7 877,428.9 877,69 516.2,69 516.5,159.1 517.1,217 518.3,260.7 520.2,294.2 523.1,322.5 525,334.1 527.4,345.7 530,355.4 532.8,363.7 536.1,371.4 540.1,379.1 544.4,385.6 549.7,392 555.8,397.8 562.2,402.6 570,407.2 577.7,410.8 585.9,413.9 595.8,416.8 606.1,419.2 617.7,421.3 646.1,424.6 682.2,426.8 728.9,428Z"/>
<path fill="#4de9ff" d="M335.2,609.5L877,609.5 877,576.7 728.7,576.3 642.2,575.4 580.3,573.5 555.8,572 532.6,570.1 510.6,567.5 492.6,564.6 475.8,560.8 462,556.7 448.6,551.6 437.1,545.9 426.8,539.2 417.8,531.8 409.7,523.3 402.1,513 395.6,501.4 389.6,487.2 385,473.1 381,456.4 377.8,437.9 375.2,417.7 373.2,395.9 371.6,370.1 369.5,308.4 368.5,220.9 368.1,69 335.2,69 335.2,609.5ZM830.3,425.5L877,425.6 877,69 519.6,69 519.9,164.2 520.7,224.7 522.2,269.8 524.7,303.2 526.5,318.7 528.6,331.5 531.3,344 534.3,354.7 537.7,363.9 542,372.7 546.7,380.4 551.7,386.9 558.2,393.3 564.8,398.5 572.6,403.2 581.4,407.5 590.6,410.8 601.3,413.9 613.3,416.5 626.7,418.6 640.9,420.3 657.7,421.8 697.7,423.8 750.6,424.9 830.3,425.5Z"/>
<path fill="#4df4ff" d="M335.2,609.5L877,609.5 877,577.7 727.4,577.4 640.9,576.4 579,574.5 554.5,573.1 531.3,571.2 509.4,568.6 491.8,565.7 474.5,561.9 461.2,558 447.7,552.9 435.8,546.9 425.5,540.3 416.5,532.8 408.6,524.6 401,514.2 394.5,502.7 388.5,488.5 383.9,474.4 379.9,457.6 376.6,438.3 374,417.8 372,395.9 370.5,370.1 368.4,308.4 367.4,222.1 367.1,69 335.2,69 335.2,609.5ZM756.8,421.6L877,422.2 877,69 523,69 523.2,156.5 523.9,214.4 525.3,258.2 527.4,291.6 530.7,319.9 532.7,331.5 535.1,341.8 537.7,351 541,359.8 544.5,367.6 549.1,375.3 553.8,381.7 559.7,388 565.9,393.3 572.6,397.8 580.3,401.9 589.3,405.7 598.5,408.7 610,411.7 621.6,413.9 634.5,415.8 665.4,418.7 704.1,420.5 756.8,421.6Z"/>
<path fill="#4dffff" d="M335.2,609.5L877,609.5 877,578.7 727.4,578.4 638.4,577.4 576.4,575.5 551.9,574.1 530,572.2 509.4,569.8 491.9,567 474.5,563.3 460.3,559.2 447,554.2 434.5,548 424.2,541.3 415.2,533.8 407.4,525.6 399.7,515.1 393.2,503.6 387.4,489.8 382.9,475.8 379.1,459.8 375.7,440.9 372.9,419 371.1,398.4 369.5,372.7 367.4,309.7 366.4,220.9 366,69 335.2,69 335.2,609.5ZM730.8,417.8L789.3,418.5 877,418.8 877,69 526.3,69 526.6,152.6 527.3,209.3 528.5,251.7 530.4,283.9 533.5,312.2 537.5,334.1 540.2,344.4 542.9,352.4 546,359.8 549.9,367.6 554.5,374.6 559.2,380.4 564.8,386.1 571.3,391.2 577.7,395.3 585.5,399.2 594.5,402.9 603.5,405.7 613.8,408.3 625.5,410.5 652.5,414 686.1,416.3 730.8,417.8Z"/>
<path fill="#58fff4" d="M335.2,609.5L877,609.5 877,579.7 728.7,579.4 640.9,578.5 577.7,576.6 551.9,575.1 530,573.4 508.5,570.9 491.3,568.2 474,564.5 459,560.2 446.1,555.3 433.4,549 423.4,542.6 413.9,534.7 405.6,525.9 398.4,515.9 392,504.2 386.4,491.1 381.6,476 377.8,459.6 374.5,440.9 371.9,420.3 370,398.9 368.5,374 366.4,309.7 365.4,220.9 365,69 335.2,69 335.2,609.5ZM800.2,415.2L877,415.4 877,69 529.7,69 530.1,156.5 530.9,214.4 532.3,256.9 534.7,290.3 536.4,305.4 538.5,318.7 540.8,330.2 543.6,340.5 546.8,350 550.5,358.6 554.7,366.3 559.7,373.4 564.8,379.2 571.3,385.1 579,390.5 586.4,394.6 595.4,398.4 604.8,401.6 616.4,404.6 628,406.9 640.9,408.9 656.4,410.6 691.2,413 736.4,414.4 800.2,415.2Z"/>
<path fill="#63ffe9" d="M335.2,609.5L877,609.5 877,580.7 727.4,580.4 639.6,579.5 575.1,577.5 549.5,576 528.7,574.3 506.8,571.8 487.4,568.6 470.6,564.9 456.5,560.7 443,555.5 431.9,549.9 421.6,543.1 412.6,535.6 404.7,527.1 397.1,516.5 390.7,504.8 385.5,492.4 380.6,476.9 376.7,460.2 373.6,442.2 371,421.6 368.9,398.4 367.4,374 365.4,310.9 364.4,222.1 364.1,69 335.2,69 335.2,609.5ZM758.3,411.3L877,412 877,69 533.1,69 533.5,152.6 534.2,208 535.6,250.5 537.8,282.6 541,309.7 543.1,321.2 545.5,331.5 548.1,340.5 551.5,349.5 555.1,357.3 559.6,365 564.4,371.4 570,377.4 576.4,382.9 582.9,387.2 590.6,391.4 598.4,394.8 608.7,398.3 619,401 630.6,403.3 642.2,405.1 671.9,408.2 709.3,410.1 758.3,411.3Z"/>
<path fill="#6effde" d="M335.2,609.5L877,609.5 877,581.6 723.5,581.3 635.8,580.4 573.9,578.5 549.3,577.1 526.1,575.1 504.2,572.5 486.3,569.6 469.4,565.8 456,561.9 442.6,556.7 430.7,550.7 420.3,544 411.3,536.4 402.9,527.1 395.8,517.1 389.4,505.3 384.2,492.7 379.7,478.2 375.7,461.5 372.6,443.5 370,422.9 368.1,401 366.5,375.3 364.5,312.2 363.5,224.7 363.1,69 335.2,69 335.2,609.5ZM738.4,407.5L794.4,408.3 877,408.6 877,69 536.6,69 536.9,148.8 537.6,202.8 538.9,244 541,276.2 544,303.2 546,314.8 548.2,325.1 550.7,334.1 553.8,343.1 557.1,350.8 560.9,358 565.6,365 571,371.4 576.5,376.6 582.9,381.5 589.5,385.6 597.4,389.4 606.1,392.8 615.1,395.6 625.5,398.2 637.1,400.4 662.9,403.6 696.4,406 738.4,407.5Z"/>
<path fill="#79ffd2" d="M335.2,609.5L877,609.5 877,582.6 724.8,582.2 634.5,581.3 572.6,579.4 546.8,577.9 524.8,576.1 504.2,573.6 487.1,570.9 469.4,567 455.2,562.9 442.3,558 429.4,551.6 419.6,545.2 410.4,537.4 402.1,528.4 394.5,517.6 388.1,505.5 382.9,492.8 378.4,478.2 374.6,461.5 371.3,442.2 368.9,421.6 367,399.7 365.5,375.3 363.5,312.2 362.6,222.1 362.2,69 335.2,69 335.2,609.5ZM805.7,404.9L877,405.2 877,69 540,69 540.4,151.4 541.3,206.7 542.8,249.2 545.3,281.3 546.9,295.5 549,308.4 551.3,319.9 554.1,330.2 557.2,339.2 561.1,348.3 565.4,356 570,362.6 575.5,368.8 581.6,374.4 588.2,379.1 595.8,383.5 604.8,387.6 613.8,390.7 624.2,393.6 637.1,396.3 650,398.3 664.2,399.9 699,402.5 744.1,404.1 805.7,404.9Z"/>
<path fill="#84ffc7" d="M335.2,609.5L877,609.5 877,583.5 724.8,583.1 637.1,582.2 573.9,580.4 548,578.9 526.1,577.2 504.7,574.8 487.4,572.1 469.8,568.3 455.2,564.2 442.1,559.3 429.4,553.1 419,546.4 409.8,538.7 401.4,529.7 394.1,519.4 388.1,508.5 382.4,495 377.8,480.2 373.9,463.7 370.7,444.8 368.1,424.2 366.2,401.9 364.7,377.9 363.5,348.3 362.6,312.2 361.7,223.4 361.3,69 335.2,69 335.2,609.5ZM772,401L877,401.7 877,69 543.5,69 543.9,147.5 544.7,201.6 546.2,242.7 548.5,274.9 552,301.9 554.2,313.5 556.8,323.8 559.7,332.9 563.3,341.8 567.2,349.5 571.3,356 576.3,362.4 581.6,367.8 587.6,372.7 594.5,377.3 602.2,381.4 611.3,385.1 620.3,388.1 630.6,390.7 642.2,393 655.1,395 684.8,397.9 722.2,399.9 772,401Z"/>
<path fill="#8fffbc" d="M335.2,609.5L877,609.5 877,584.3 723.5,584 635.8,583.1 571.3,581.2 548,579.9 524.8,578 502.9,575.5 483.5,572.4 466.8,568.7 452.6,564.5 439,559.3 428.1,553.8 417.8,547.1 408.7,539.6 400.7,531 393.2,520.5 387,509.1 381.6,496.3 377.1,482.1 373.1,465.4 370,447.4 367.3,425.5 365.2,402.3 363.8,377.9 361.8,314.8 360.8,226 360.4,69 335.2,69 335.2,609.5ZM755.1,397.2L806,397.9 877,398.2 877,69 547,69 547.4,144.9 548.2,197.7 549.6,237.6 551.9,269.8 555,295.5 557.1,307.1 559.6,317.4 562.2,326.4 565.6,335.4 569.2,343.1 572.9,349.5 577.5,356 582.9,362 588,366.7 594.5,371.5 602.2,376.1 610,379.7 618.9,383 628,385.7 638.4,388.1 650,390.2 677,393.5 710.6,395.7 755.1,397.2Z"/>
<path fill="#9bffb1" d="M335.2,609.5L877,609.5 877,585.2 722.2,584.8 631.9,583.9 570,582 544.2,580.6 522.2,578.7 501.6,576.3 483.6,573.5 466.8,569.8 452.6,565.7 439,560.6 426.8,554.5 416.5,547.8 407.4,540.1 399.1,531 392,520.9 385.7,509.1 380.4,496.2 375.6,480.8 371.8,464.1 368.7,445.7 366.2,424.2 364.3,402.3 362.8,376.6 360.9,313.5 359.9,223.4 359.6,69 335.2,69 335.2,609.5ZM850.8,394.6L877,394.7 877,69 550.5,69 551,150.1 552,204.1 553.8,245.3 556.6,277.5 558.6,291.6 560.9,304.5 563.5,315.2 566.6,325.1 570.2,334.1 574.1,341.8 579,349.5 584.2,356 590.6,362.3 597.1,367.2 604.8,371.9 612.5,375.7 621.7,379.1 633.2,382.5 644.8,385.1 657.7,387.3 687.4,390.5 726.1,392.7 777.7,394 850.8,394.6Z"/>
<path fill="#a6ffa6" d="M335.2,609.5L877,609.5 877,586 724.8,585.7 635.8,584.8 571.3,583 545.5,581.5 523.5,579.8 501.6,577.3 483.5,574.5 466.7,570.9 451.3,566.5 438.4,561.6 426,555.5 416.1,549 406.8,541.3 399.7,533.7 393.2,525.1 388.1,516.6 382.9,505.9 378.7,495 374.9,482.1 371.3,466.8 368.6,451.2 365.7,429.3 363.5,403.6 361.7,372.7 360.5,336.7 359.2,242.7 358.7,69 335.2,69 335.2,609.5ZM808,390.7L877,391.1 877,69 554.1,69 554.6,144.9 555.5,197.7 557.1,237.6 559.7,269.8 561.5,283.9 563.5,295.5 566,307.1 568.7,316.9 572.1,326.4 575.5,334.1 579.9,341.8 584.4,348.3 590,354.7 595.8,359.9 602.2,364.6 610,369.1 619,373.2 628,376.4 638.4,379.3 649.6,381.7 661.6,383.7 675.8,385.5 709.2,388.2 750.6,389.8 808,390.7Z"/>
<path fill="#b1ff9b" d="M335.2,609.5L877,609.5 877,586.8 720.9,586.5 633.2,585.6 569.7,583.8 545.5,582.4 522.2,580.6 500.3,578.1 481,575 464.2,571.3 450,567.2 437.1,562.3 425.5,556.5 415.2,549.9 406.1,542.4 399,534.9 392.3,525.9 386.8,516.7 381.6,505.8 377.2,493.7 373.5,480.8 370,465.4 367.5,450.2 364.7,428 362.4,401 360.9,372.7 359.7,336.7 358.4,242.7 357.9,69 335.2,69 335.2,609.5ZM789.5,386.9L877,387.5 877,69 557.7,69 558.2,142.4 559.1,193.8 560.8,233.7 563.2,264.6 566.8,290.3 569,300.6 571.7,310.9 574.7,319.9 578.5,329 582.6,336.7 586.8,342.9 591.9,349.2 597.1,354.2 603.5,359.3 610.4,363.7 618,367.6 626.7,371.1 635.8,374 647.4,376.9 659,379.1 671.9,381 701.6,383.8 739,385.7 789.5,386.9Z"/>
<path fill="#bcff8f" d="M335.2,609.5L877,609.5 877,587.6 720.9,587.3 630.6,586.4 567.4,584.5 541.6,583 519.7,581.2 499,578.9 481.2,576 464.2,572.4 450,568.3 436.4,563.2 424.2,557.1 413.9,550.4 404.9,542.8 397.5,534.9 390.9,525.9 385.5,516.7 380.4,505.5 376.5,495 372.4,480.8 369,465.4 366.5,449.9 363.7,426.8 361.6,401 359.9,370.1 358.8,335.4 357.5,240.2 357.1,69 335.2,69 335.2,609.5ZM779.9,383L877,383.8 877,69 561.4,69 561.9,139.8 562.8,190 564.3,228.6 566.7,259.5 570.3,285.2 572.6,296.6 574.9,305.8 577.8,314.8 581.5,323.8 585.5,331.5 589.3,337.6 594.5,344.2 599.7,349.5 605.9,354.7 612.5,359.1 620.3,363.2 628,366.5 637.1,369.6 647.4,372.4 659,374.8 670.6,376.6 699,379.7 733.8,381.7 779.9,383Z"/>
<path fill="#c7ff84" d="M335.2,609.5L877,609.5 877,588.4 722.2,588.1 633.2,587.2 568.7,585.4 542.9,584 521,582.2 500,579.9 481,576.9 464.2,573.4 448.7,569 435.8,564.1 423.5,558 413.6,551.6 404.3,543.9 397.1,536.3 390.7,527.6 385,518.1 380.1,507.8 375.4,495 371.7,482.1 368.6,467.9 365.7,451.2 363,429.3 360.9,403.6 359.2,372.7 358,336.7 356.8,242.7 356.4,69 335.2,69 335.2,609.5ZM775,379.1L877,380.1 877,69 565.1,69 565.6,138.5 566.5,187.4 568.1,226 570.4,255.6 574,281.3 576,291.6 578.6,301.9 581.5,310.9 584.6,318.7 588.4,326.4 592.3,332.8 597.1,339.1 602.2,344.6 608.7,350.2 615.1,354.6 622.2,358.6 630.6,362.3 639.6,365.5 648.7,368 659,370.3 670.6,372.4 697.7,375.6 731.2,377.7 775,379.1Z"/>
<path fill="#d2ff79" d="M335.2,609.5L877,609.5 877,589.2 720.9,588.8 629.3,587.9 566.1,586.1 541.6,584.7 518.4,582.8 496.4,580.3 478,577.3 461.6,573.7 447.4,569.6 434,564.5 421.6,558.2 411.7,551.6 402.6,543.9 395.5,536.1 389.4,527.7 384.2,519 379,507.8 374.8,496.3 371,483.4 367.6,467.9 364.8,451.2 362.2,429.3 359.9,401 358.4,372.7 357.2,335.4 356,240.2 355.6,69 335.2,69 335.2,609.5ZM773.5,375.3L877,376.4 877,69 568.9,69 569.4,135.9 570.3,184.8 571.9,222.1 574.2,251.7 577.5,276.2 579.5,286.5 582,296.8 584.8,305.8 588,314.1 591.9,322.1 595.8,328.5 600.9,335.4 605.7,340.5 611.3,345.5 617.7,350.1 624.2,353.8 631.9,357.5 640.9,360.9 650.3,363.7 660.3,366.1 671.9,368.2 697.7,371.5 731.2,373.8 773.5,375.3Z"/>
<path fill="#deff6e" d="M335.2,609.5L877,609.5 877,589.9 722.2,589.6 631.9,588.7 567.4,586.9 541.6,585.5 519.3,583.8 497.7,581.4 479.7,578.6 461.8,574.8 447.4,570.7 434.3,565.7 421.6,559.5 411.5,552.9 402.3,545.1 395.2,537.4 388.5,528.4 382.9,518.8 377.8,507.5 373.7,496.3 369.8,482.1 366.5,466.7 363.8,449.9 361.1,426.8 359.1,401 357.5,370.1 356.4,335.4 355.2,241.4 354.8,69 335.2,69 335.2,609.5ZM774.6,371.4L818.9,372.2 877,372.6 877,69 572.7,69 573.2,134.6 574.2,182.2 575.8,219.6 578.2,249.2 581.6,273.6 583.6,283.9 586.2,294.2 589.1,303.2 592.2,310.9 595.8,318.3 599.6,324.7 604.8,331.5 609.5,336.7 615.1,341.6 621.6,346.3 628,350 635.8,353.7 644.8,357.1 653.8,359.8 664.2,362.2 675.8,364.4 701.6,367.6 733.8,369.9 774.6,371.4Z"/>
<path fill="#e9ff63" d="M335.2,609.5L877,609.5 877,590.6 718.3,590.3 629.3,589.5 565.8,587.6 540.3,586.2 517.1,584.4 495.2,581.9 475.8,578.7 459,575 445.1,570.9 431.8,565.7 420.3,559.9 410,553.1 401,545.4 393.7,537.4 387.2,528.4 381.6,518.6 376.8,507.8 372.6,495.9 368.7,481.8 365.6,466.7 362.9,449.9 360.4,428 358.4,402.3 356.8,372.7 355.7,335.4 354.5,241.4 354.1,69 335.2,69 335.2,609.5ZM778.2,367.6L877,368.7 877,69 576.6,69 577.1,133.3 578.1,179.7 579.6,215.7 582,245.3 585.4,269.8 587.5,280.1 590.1,290.3 593,299.4 596.1,307.1 599.6,314.3 603.8,321.2 608.7,327.6 613.5,332.8 619,337.7 625.5,342.3 631.9,346.1 639.6,349.8 648.7,353.2 658,356 668,358.4 679.6,360.5 705.4,363.8 737.7,366.1 778.2,367.6Z"/>
<path fill="#f4ff58" d="M335.2,609.5L877,609.5 877,591.4 719.6,591.1 629.3,590.2 564.8,588.3 539,586.9 515.8,585.1 493.9,582.5 477.1,579.9 459.4,576 444.8,571.8 431.9,566.9 419.4,560.6 409.6,554.2 400.5,546.4 393.2,538.5 386.8,529.7 381.6,520.7 376.3,509.1 371.7,496.3 368.2,483.4 364.9,467.7 362.2,451.2 359.7,429.3 357.6,402.3 356,371.4 354.9,335.4 353.8,241.4 353.4,69 335.2,69 335.2,609.5ZM784.2,363.7L877,364.8 877,69 580.5,69 581,132.1 582.1,178.4 583.7,214.4 586.3,244 589.9,268.5 592.1,278.8 594.5,287.8 597.5,296.8 600.7,304.5 604.7,312.2 608.7,318.5 613.8,325.1 618.9,330.2 624.2,334.7 630.6,339.2 637.7,343.1 644.8,346.3 653.5,349.5 662.9,352.3 673.2,354.7 684.8,356.8 710.6,360 742.8,362.2 784.2,363.7Z"/>
<path fill="#ffff4d" d="M335.2,609.5L877,609.5 877,592.1 718.3,591.8 629.3,590.9 564.8,589.1 538,587.6 517.1,586 496.4,583.7 475.8,580.5 459,576.9 443.6,572.4 430.7,567.4 419,561.6 408.7,554.8 399.7,547.1 392,538.7 385.6,529.7 380.4,520.5 375.2,509 371.2,497.5 367.3,483.4 363.8,466.7 361.2,449.9 358.7,426.8 356.8,402.3 355.3,371.4 354.2,335.4 353.1,241.4 352.7,69 335.2,69 335.2,609.5ZM793.3,359.8L877,360.8 877,69 584.5,69 585.1,132.1 586.1,177.1 587.9,213.1 590.4,241.4 594.2,265.9 596.4,276.2 598.9,285.2 601.5,292.9 604.8,300.7 608.7,308.2 612.9,314.8 617.7,320.9 623.1,326.4 629.3,331.5 635.8,335.8 642.2,339.4 650.8,343.1 659,346 669.3,348.9 679.6,351.2 691.2,353.2 718.3,356.3 751.9,358.5 793.3,359.8Z"/>
<path fill="#fff44d" d="M335.2,609.5L877,609.5 877,592.8 717,592.5 625.5,591.6 562.2,589.7 536.4,588.3 514.5,586.5 492.6,584 475.1,581.2 457.8,577.4 443.6,573.3 430.4,568.3 417.8,562 407.9,555.5 398.9,547.7 391.8,540 385.5,531.4 380,522 374.7,510.4 370.2,497.5 366.4,483.4 363.4,469.2 360.6,451.2 358,428 356,401 354.6,371.2 353.5,335.4 352.3,240.2 352,69 335.2,69 335.2,609.5ZM806.4,356L877,356.7 877,69 588.6,69 589.2,130.8 590.3,175.8 592.1,210.6 594.7,238.9 598.4,262.5 600.9,273.6 603.5,282.6 606.7,291.6 610,298.9 613.8,305.8 618.1,312.2 622.9,318 628,323.1 634.5,328.2 640.9,332.4 648.7,336.4 656.4,339.6 665.4,342.7 675.8,345.4 686.1,347.5 698.3,349.5 726.1,352.6 760.9,354.7 806.4,356Z"/>
<path fill="#ffe94d" d="M335.2,609.5L877,609.5 877,593.4 718.3,593.1 628,592.3 563.5,590.5 537.7,589.1 515.8,587.4 494.7,585 475.8,582.2 458.9,578.6 443.6,574.3 430.7,569.5 417.9,563.2 407.4,556.4 398.4,548.7 390.7,540.3 384.2,531.3 378.9,522 373.7,510.4 369.3,497.5 365.5,483.4 362.3,467.4 359.7,450.4 357.1,426.8 355.3,402.3 353.8,371.4 352.8,335.4 351.7,241.4 351.3,69 335.2,69 335.2,609.5ZM826,352.1L877,352.6 877,69 592.7,69 593.4,130.8 594.6,175.8 596.5,210.6 599.3,238.9 603.3,262 605.8,272.3 608.7,281.6 612.1,290.3 615.9,298.1 619.7,304.5 624.5,310.9 629.3,316.2 635.8,321.9 642.1,326.4 648.8,330.2 656.4,333.8 665.4,337.2 675.8,340.2 686.1,342.6 710.6,346.5 740.3,349.2 777.7,351 826,352.1Z"/>
<path fill="#ffde4d" d="M335.2,609.5L877,609.5 877,594.1 717,593.8 625.5,592.9 560.9,591.1 535.1,589.6 513.2,587.9 491.3,585.4 473.1,582.5 456.5,578.9 442.2,574.8 428.7,569.6 416.5,563.5 406.3,556.7 397.3,549 389.4,540.2 382.9,531 377.8,521.8 372.6,510 368.4,497.5 364.7,483.4 361.6,467.9 358.9,449.9 356.4,426.8 354.6,401.2 353.1,371.4 352.1,334.1 351,238.9 350.6,69 335.2,69 335.2,609.5ZM859.6,348.3L877,348.4 877,69 596.9,69 597.7,130.8 599,175.8 601.1,210.6 604.2,238.9 606.1,250.8 608.5,262 611.3,272.3 614.4,281.3 617.7,289.1 621.8,296.8 626.7,304.2 631.9,310.3 637.1,315.2 643.5,320.3 651.2,325.1 659,328.9 668,332.4 677,335.2 687.4,337.8 699,340 726.1,343.5 759.6,345.9 802.2,347.4 859.6,348.3Z"/>
<path fill="#ffd24d" d="M335.2,609.5L877,609.5 877,594.8 718.3,594.5 628,593.7 562.2,591.8 536.4,590.4 514.5,588.7 492.8,586.3 474.5,583.5 457.2,579.9 442.3,575.7 429.4,570.9 416.5,564.5 406.1,557.8 397.1,550.2 389.4,541.8 382.9,532.8 377.5,523.3 372.3,511.7 367.9,498.8 364.1,484.7 361,469.2 358.3,451.2 355.8,428.7 353.9,402.3 352.5,372.7 351.5,336.7 350.3,242.7 350,69 335.2,69 335.2,609.5ZM806.6,343.1L877,344.1 877,69 601.3,69 601.9,125.6 603.1,168.1 605,201.6 607.7,228.6 611.5,251.7 613.8,261.9 616.4,270.6 619.4,278.8 622.8,286.5 626.7,293.5 630.7,299.4 635.8,305.5 640.9,310.5 646.2,314.8 652.5,319 660.3,323.2 667.7,326.4 675.8,329.2 686.1,332.1 696.4,334.4 708,336.4 733.8,339.5 766.1,341.7 806.6,343.1Z"/>
<path fill="#ffc74d" d="M335.2,609.5L877,609.5 877,595.4 715.8,595.1 624.2,594.3 560.9,592.4 535.1,591 511.9,589.2 490,586.7 471.5,583.8 453.9,579.9 440.6,576 427.1,570.9 415.2,564.9 404.9,558.1 395.8,550.3 388.1,541.7 381.6,532.5 376.5,523.3 371.3,511.5 367,498.8 363.3,484.7 360,467.9 357.4,449.9 355.1,428 353.2,402.3 351.8,371.4 350.7,334.1 349.7,238.9 349.3,69 335.2,69 335.2,609.5ZM837.8,339.2L877,339.7 877,69 605.7,69 606.4,126.9 607.8,169.4 609.8,202.8 612.8,229.9 614.9,242.7 617.1,253 619.5,262 622.5,271 625.7,278.8 629.6,286.5 633.7,292.9 638.4,299 643.6,304.5 649.6,309.7 656.4,314.3 662.9,317.9 670.6,321.4 679.6,324.7 689.9,327.6 700.3,329.9 723.5,333.6 753.2,336.3 789.3,338.1 837.8,339.2Z"/>
<path fill="#ffbc4d" d="M335.2,609.5L877,609.5 877,596.1 717,595.8 626.7,594.9 560.9,593.1 535.1,591.7 513.2,590 491.3,587.6 473.2,584.9 455.7,581.2 441,577 427.9,572.2 415.2,565.9 405,559.3 395.8,551.6 388.1,543.2 381.6,534.3 376.1,524.6 371,513 366.2,498.9 362.5,484.7 359.5,469.2 356.8,451.2 354.5,429.3 352.5,402.3 351.1,371.4 350.1,336.7 349,242.7 348.7,69 335.2,69 335.2,609.5ZM809.1,334.1L877,335.2 877,69 610.2,69 610.9,123.1 612.2,162.9 614.1,195.1 616.9,222.1 620.6,244 622.9,253.4 625.5,262.1 628.3,269.8 631.7,277.5 635.2,283.9 639.6,290.5 644.8,296.7 650,301.7 655.1,305.9 661.6,310.2 668,313.7 676.3,317.4 684.8,320.4 693.8,323 714.5,327.2 739,330.3 769.9,332.6 809.1,334.1Z"/>
<path fill="#ffb14d" d="M335.2,609.5L877,609.5 877,596.7 715.8,596.4 622.9,595.5 558.4,593.7 532.6,592.2 510.6,590.5 488.7,588 470.1,585 452.6,581.2 439.2,577.3 425.7,572.2 413.9,566.2 403.6,559.4 394.5,551.7 386.8,543.1 380.4,533.9 375.1,524.6 370,512.9 365.7,500.1 361.7,484.7 358.5,467.9 355.9,449.9 353.6,426.8 351.9,402.3 350.5,371.4 349.4,334.1 348.4,238.9 348,69 335.2,69 335.2,609.5ZM849.2,330.2L877,330.6 877,69 614.8,69 615.6,123.1 617,164.2 619.1,196.4 622.3,223.4 624.3,235 626.6,245.3 629.3,255.2 632.1,263.3 635.8,271.7 639.5,278.8 643.8,285.2 648.7,291.2 654.2,296.8 660.3,301.7 666.7,305.9 673.8,309.7 682.2,313.3 690.4,316.1 700.3,318.8 710.6,321.1 735.1,324.8 764.8,327.4 800.9,329.1 849.2,330.2Z"/>
<path fill="#ffa64d" d="M335.2,609.5L877,609.5 877,597.3 715.8,597 625.5,596.2 559.7,594.4 533.9,593 511.9,591.3 490.1,588.9 471.9,586.1 454.4,582.5 439.7,578.3 426.6,573.5 413.9,567.2 403.7,560.6 394.5,552.9 386.8,544.5 380.4,535.6 374.2,524.6 369.2,513 364.9,500.1 361,485 358,469.2 355.4,451.2 353.1,429.3 351.2,402.3 349.8,371.4 348.9,336.7 347.8,242.7 347.4,69 335.2,69 335.2,609.5ZM828.6,325.1L877,325.8 877,69 619.5,69 620.4,120.5 621.8,160.4 623.8,191.3 626.8,217 630.9,238.9 633.2,247.9 636.2,256.9 639.4,264.6 642.6,271 646.4,277.5 651.1,283.9 655.8,289.1 661.6,294.3 668,299 674.5,302.9 682.2,306.6 689.9,309.7 697.9,312.2 707.8,314.8 728.8,318.7 755.7,321.7 788,323.7 828.6,325.1Z"/>
<path fill="#ff9b4d" d="M335.2,609.5L877,609.5 877,597.9 714.5,597.6 621.6,596.8 557.1,594.9 531.3,593.5 509.4,591.7 487.4,589.2 469,586.3 452.6,582.8 438,578.6 424.5,573.5 412.6,567.5 402.3,560.7 393.2,552.9 385.5,544.3 379.1,535.2 373.2,524.6 368.3,513 363.7,498.8 360.2,484.7 357.1,468.6 354.5,450.2 352.2,426.8 350.5,402.3 349.2,371.4 348.2,334.1 347.1,240.2 346.8,69 335.2,69 335.2,609.5ZM820,319.9L877,321 877,69 624.4,69 625.3,119.2 626.6,156.5 628.7,187.4 631.5,211.8 635.3,232.4 637.6,241.4 640.5,250.5 643.5,258.2 646.5,264.6 650.2,271 654.7,277.5 659.1,282.6 664.4,287.8 670.6,292.7 677,296.8 683.5,300.2 691.2,303.5 699,306.3 708,308.8 728.7,313.1 753.2,316.2 782.8,318.4 820,319.9Z"/>
<path fill="#ff8f4d" d="M335.2,609.5L877,609.5 877,598.5 714.5,598.2 624.2,597.4 558.4,595.6 532.6,594.2 510.6,592.5 489.3,590.2 470.6,587.3 453.4,583.8 438.4,579.6 425.4,574.8 412.6,568.5 402.4,561.9 393.2,554.2 385.5,545.7 379.1,536.8 372.9,525.9 367.9,514.3 363.6,501.2 359.7,486 356.5,469.2 354,451.2 351.8,429.3 349.9,402.3 348.5,371.4 347.6,336.7 346.6,242.7 346.2,69 335.2,69 335.2,609.5ZM818,314.8L877,316 877,69 629.4,69 630.3,116.6 631.7,153.9 633.8,183.5 636.7,208 640.5,228.6 645.4,245.3 648.4,253 651.4,259.5 655.1,266 659.5,272.3 664.2,277.8 669.2,282.6 674.5,286.9 680.9,291.2 687.4,294.7 694.9,298.1 710.6,303.3 729.9,307.5 754.4,310.9 782.8,313.2 818,314.8Z"/>
<path fill="#ff844d" d="M335.2,609.5L877,609.5 877,599.1 713.2,598.8 620.3,597.9 555.8,596.1 530,594.7 508.1,592.9 486.1,590.4 468.2,587.6 451.3,584 437,579.9 423.4,574.8 411.3,568.7 401,561.9 392,554.1 384.2,545.5 377.8,536.3 372,525.9 367.1,514.3 362.5,500.1 359,486 355.8,469.4 353.3,450.8 351,428 349.3,402.3 347.9,371.4 346.9,334.1 345.9,240.2 345.6,69 335.2,69 335.2,609.5ZM820.7,309.7L877,310.9 877,69 634.5,69 635.5,115.3 636.9,151.4 639,179.7 641.9,204.1 645.9,224.7 650.9,241.4 653.8,248.7 657.2,255.6 661,262 664.6,267.2 669.3,272.7 674.2,277.5 679.6,281.9 686.1,286.1 692.5,289.6 699.9,292.9 715.8,298.2 735.1,302.4 758.3,305.7 786.7,308 820.7,309.7Z"/>
<path fill="#ff794d" d="M335.2,609.5L877,609.5 877,599.7 713.2,599.4 621.6,598.6 555.8,596.7 530.5,595.3 508.1,593.6 486.1,591.1 466.8,588.1 450,584.4 434.6,579.9 421.4,574.8 410,568.9 399.7,562 390.8,554.2 382.9,545.2 376.7,536.1 371.1,525.9 366.2,514 362.1,501.4 358.2,486 354.9,467.9 352.4,448.6 350.3,426.8 348.5,399.7 347.2,368.8 346.4,334.1 345.4,241.4 345,69 335.2,69 335.2,609.5ZM828.1,304.5L877,305.6 877,69 639.8,69 640.8,114 642.3,148.8 644.5,177.1 647.4,200.3 651.2,219.8 653.6,228.6 656.4,236.9 659.3,244 662.9,251.2 666.7,257.6 670.6,262.9 675.5,268.5 680.9,273.5 686.1,277.5 692.1,281.3 699,285 705.4,287.8 713.2,290.6 722.2,293.3 741.5,297.4 764.8,300.6 793.2,302.9 828.1,304.5Z"/>
<path fill="#ff6e4d" d="M335.2,609.5L877,609.5 877,600.3 714.5,600 621.6,599.1 555.8,597.3 530,595.9 506.8,594.1 484.8,591.6 466.8,588.8 449.6,585 434.5,580.7 421.6,575.7 409.6,569.6 399.7,563 390.7,555.2 382.9,546.6 376.5,537.4 370.9,527.1 365.9,515.6 361.3,501.4 357.8,487.2 354.6,469.9 352,451 349.7,428 348.1,403.4 346.8,372.7 345.8,335.4 344.8,241.4 344.5,69 335.2,69 335.2,609.5ZM840.9,299.4L877,300.1 877,69 645.3,69 646.3,111.5 647.9,146.2 650.2,174.5 653.3,197.7 657.3,217 659.9,226 662.7,233.7 666,241.4 669.5,247.9 673.2,253.7 677.6,259.5 682.5,264.6 688.4,269.8 693.8,273.7 700.2,277.5 706.7,280.7 714.5,283.8 731.2,288.8 751.9,292.8 775.1,295.7 804.8,297.9 840.9,299.4Z"/>
<path fill="#ff634d" d="M335.2,609.5L877,609.5 877,600.8 711.9,600.5 620.3,599.7 555.8,597.9 530,596.5 506.8,594.7 484.8,592.3 465.5,589.2 448.7,585.6 433.7,581.2 420.5,576 408.7,570 398.6,563.2 389.7,555.5 381.8,546.4 375.6,537.4 370,527.1 364.9,514.8 360.6,501.4 356.8,486 353.6,467.9 351.1,448.6 349,426.8 347.3,399.7 346.1,370.1 345.2,334.1 344.2,241.4 343.9,69 335.2,69 335.2,609.5ZM862.2,294.2L877,294.5 877,69 651,69 652.1,112.8 653.8,146.2 656.2,173.2 659.6,196.4 664.2,216 667,224.7 670,232.4 673.2,239 677,245.6 681.5,251.7 685.9,256.9 691.2,262 696.4,266 702.9,270.2 709.3,273.7 717,277.1 724.8,279.9 742.8,284.6 764.8,288.3 790.6,291 822.1,292.9 862.2,294.2Z"/>
<path fill="#ff584d" d="M335.2,609.5L877,609.5 877,601.4 713.2,601.1 621.6,600.3 555.8,598.5 530,597.1 506.8,595.3 484.8,592.9 466.8,590.1 448.9,586.3 434.5,582.2 421.6,577.3 408.7,570.9 398.4,564.1 389.4,556.3 381.7,547.7 375.2,538.3 369.2,527.1 364.3,515.6 359.8,501.4 356.1,486 353.1,469.2 350.6,449.9 348.4,426.8 346.8,401.7 345.5,370.6 344.6,334.1 343.6,240.2 343.3,69 335.2,69 335.2,609.5ZM842.8,287.8L877,288.7 877,69 656.8,69 657.9,108.9 659.6,141.1 661.9,166.8 665,188.7 669.3,208 674.4,223.4 677.3,229.9 680.9,236.7 684.8,242.7 688.8,247.9 693.6,253 699,257.8 704.7,262 710.6,265.6 717,268.9 724.8,272.1 740.3,276.9 759.6,280.9 781.7,283.9 808.6,286.2 842.8,287.8Z"/>
<path fill="#ff4d4d" d="M335.2,609.5L877,609.5 877,601.9 711.9,601.7 619,600.8 554.5,599 528.7,597.6 505.5,595.8 483.5,593.4 464.2,590.3 447.4,586.7 433,582.5 419.7,577.3 407.4,571.1 397.6,564.5 388.7,556.7 381.6,548.9 374.5,538.7 368.7,528 363.6,515.6 359.1,501.4 355.5,486 352.3,467.9 349.8,448.6 347.8,426.8 346.1,399.7 344.9,370.1 344,334.1 343.1,238.9 342.8,69 335.2,69 335.2,609.5ZM835.9,281.3L877,282.6 877,69 662.9,69 664,107.6 665.7,137.2 668,162.5 671.1,183.5 675.1,201.6 680.2,217 686.4,229.9 689.9,235.6 693.8,240.8 697.8,245.3 702.9,250.1 708.1,254.3 714,258.2 719.6,261.3 726.9,264.6 741.8,269.8 759.6,273.9 780.2,277.1 806,279.6 835.9,281.3Z"/>
<path fill="#f44d4d" d="M335.2,609.5L877,609.5 877,602.5 713.2,602.2 621.6,601.4 555.8,599.6 528.7,598.2 506.8,596.5 484,594.1 465.5,591.2 448.5,587.6 433.2,583.3 420.3,578.4 407.8,572.2 397.1,565.1 388.1,557.3 380.4,548.5 373.9,539.2 368.1,528.4 362.8,515.6 358.4,501.5 354.8,486 351.8,469.2 349.3,449.9 347.2,426.8 345.6,399.7 344.3,368.8 343.5,334.1 342.5,240.2 342.2,69 335.2,69 335.2,609.5ZM872.1,276.2L877,276.3 877,69 669.2,69 670.5,107.6 672.3,137.2 675,162.9 678.5,183.5 683.1,201.6 685.8,209.3 689.1,217 692.5,223.7 696.4,229.8 700.3,235 705,240.2 710.6,245.3 715.8,249.1 720.9,252.4 727.4,255.9 735.1,259.3 742.8,262 759.6,266.5 780.2,270.1 804.8,272.9 834.4,274.8 872.1,276.2Z"/>
<path fill="#e94d4d" d="M335.2,609.5L877,609.5 877,603 710.6,602.7 617.7,601.9 553.2,600.1 527.4,598.7 504.2,596.9 482.3,594.4 463.5,591.5 446.1,587.7 432.5,583.8 419,578.6 407.4,572.8 396.7,565.7 387.8,558 380.4,549.8 373.5,540 367.4,528.8 362.3,516.2 358.1,502.7 354.4,487.2 351.2,469.2 348.6,448.6 346.6,426.8 345,399.7 342.9,334.1 342,238.9 341.7,69 335.2,69 335.2,609.5ZM841.8,268.5L877,269.8 877,69 675.8,69 677,103.7 678.7,130.8 681.1,153.9 684.4,174.5 688.4,191.3 693.2,205.4 696.1,211.8 699.6,218.3 706.7,228.6 711.4,233.7 715.8,237.8 720.9,241.8 726.2,245.3 732.5,248.8 738.8,251.7 753.2,256.8 769.9,260.9 790.6,264.3 813.8,266.7 841.8,268.5Z"/>
<path fill="#de4d4d" d="M335.2,609.5L877,609.5 877,603.6 710.6,603.3 619,602.5 551.9,600.6 526.1,599.2 504.2,597.5 482.3,595 462.9,592 446.1,588.4 430.7,583.9 417.2,578.6 406.1,572.9 395.8,566 386.8,558.2 379.1,549.4 372.6,540 367.1,529.7 361.8,516.8 357.4,502.7 353.7,487.2 350.7,469.8 348.1,449.5 346.1,426.8 344.4,399.7 342.4,334.1 341.5,241.4 341.2,69 335.2,69 335.2,609.5ZM853.3,262L877,262.9 877,69 682.6,69 684,102.5 685.9,129.5 688.3,151.4 691.6,170.7 695.9,187.4 701.1,201.6 707.2,213.1 710.6,218.3 714.7,223.4 719.6,228.5 724.1,232.4 729.3,236.3 735.1,239.9 748,246.1 762.2,250.8 779,254.7 799.6,257.9 824.1,260.3 853.3,262Z"/>
<path fill="#d24d4d" d="M335.2,609.5L877,609.5 877,604.1 711.9,603.8 619,603 553.2,601.2 527.4,599.8 504.2,598.1 482.3,595.6 463.6,592.8 446.1,589.1 431.9,585 418.4,579.9 406.1,573.8 395.9,567 386.8,559.2 379.1,550.6 372.5,541.3 366.3,529.7 361.1,516.8 357,504 353.1,487.2 350,469.2 347.4,448.6 345.5,426.8 343.9,399.7 342.7,370.1 341.8,332.8 340.9,238.9 340.6,69 335.2,69 335.2,609.5ZM873.1,255.6L877,255.7 877,69 689.8,69 691.2,100.5 693.3,126.9 696,148.8 699.6,168.1 704.1,184.4 709.5,197.7 716.2,209.3 720,214.4 724.8,219.8 729.9,224.5 735.1,228.5 745.9,235 759.6,240.8 775.1,245.4 793.2,249 815.1,251.9 840.9,254 873.1,255.6Z"/>
<path fill="#c74d4d" d="M335.2,609.5L877,609.5 877,604.6 710.6,604.3 616.4,603.5 551.9,601.7 526.1,600.3 502.9,598.5 481,596.1 461.6,593 444.8,589.4 429.9,585 416.6,579.9 404.9,573.9 394.6,567 385.8,559.3 377.9,550.3 371.3,540.7 365.5,529.7 360.3,516.8 355.8,502 352.2,486 349.4,469.2 346.8,448.3 344.8,425.5 343.3,399.7 341.3,334.1 340.4,238.9 340.1,69 335.2,69 335.2,609.5ZM869.1,247.9L877,248.2 877,69 697.4,69 698.9,98.6 700.9,123.1 703.6,143.6 707.1,161.7 711.5,177.1 717,190.8 723.5,202 727.4,207.2 731.5,211.8 740.3,219.7 745.7,223.4 751.9,227 764.8,232.8 779,237.2 795.7,240.9 816.4,243.9 840.9,246.3 869.1,247.9Z"/>
<path fill="#bc4d4d" d="M335.2,609.5L877,609.5 877,605.1 711.9,604.8 620.3,604.1 581.6,603.3 546.8,602 505.5,599.3 482.3,596.8 464.2,594.1 446.1,590.4 431.9,586.4 417.8,581.2 404.9,574.8 394.5,567.9 385.5,560.1 377.9,551.6 371.3,542.1 365.4,531 360.1,518.1 355.7,504 351.8,487.2 349.2,471.8 346.7,452.5 344.1,422.9 342.8,399.7 340.9,336.7 340,262 339.6,69 335.2,69 335.2,609.5ZM874.7,240.2L877,240.3 877,69 705.3,69 707,97.3 709.1,120.5 711.9,139.9 715.7,157.8 720,172 725.5,184.8 728.7,190.4 732.5,196.3 740.3,205.3 749.3,213 759.9,219.6 772.5,225.2 787.6,229.9 804.8,233.5 824.1,236.3 847.3,238.5 874.7,240.2Z"/>
<path fill="#b14d4d" d="M335.2,609.5L877,609.5 877,605.6 625.5,604.9 566.1,603.6 537.7,602.3 501.6,599.8 478.4,597.1 462.9,594.7 444.8,590.9 430.7,586.9 416.5,581.5 406.1,576.4 395.8,569.8 389.4,564.7 385.5,561.1 380.1,555.5 375.9,550.3 370.7,542.6 364.4,531 359.2,518.1 354.2,501.4 350.3,483.4 347.6,466.7 345,443.5 342.4,407.5 341.2,379.1 339.8,319.9 339.1,69 335.2,69 335.2,609.5ZM864.7,231.1L877,231.9 877,69 713.8,69 715.4,94.7 717.5,115.3 720.4,134.6 723.8,150.1 728.2,164.2 733.1,175.8 739.1,186.1 746.2,195.1 754.4,202.8 763.9,209.3 775.1,214.9 788,219.6 802.4,223.4 820.2,226.7 840.9,229.2 864.7,231.1Z"/></g><g stroke="#000" stroke-opacity="0.055" stroke-width="1" shape-rendering="crispEdges">
<line x1="386.5" y1="69" x2="386.5" y2="610"/>
<line x1="335" y1="558.5" x2="877" y2="558.5"/>
<line x1="438.5" y1="69" x2="438.5" y2="610"/>
<line x1="335" y1="506.5" x2="877" y2="506.5"/>
<line x1="489.5" y1="69" x2="489.5" y2="610"/>
<line x1="335" y1="455.5" x2="877" y2="455.5"/>
<line x1="541.5" y1="69" x2="541.5" y2="610"/>
<line x1="335" y1="403.5" x2="877" y2="403.5"/>
<line x1="593.5" y1="69" x2="593.5" y2="610"/>
<line x1="335" y1="352.5" x2="877" y2="352.5"/>
<line x1="644.5" y1="69" x2="644.5" y2="610"/>
<line x1="335" y1="300.5" x2="877" y2="300.5"/>
<line x1="696.5" y1="69" x2="696.5" y2="610"/>
<line x1="335" y1="249.5" x2="877" y2="249.5"/>
<line x1="747.5" y1="69" x2="747.5" y2="610"/>
<line x1="335" y1="197.5" x2="877" y2="197.5"/>
<line x1="799.5" y1="69" x2="799.5" y2="610"/>
<line x1="335" y1="146.5" x2="877" y2="146.5"/>
<line x1="851.5" y1="69" x2="851.5" y2="610"/>
<line x1="335" y1="94.5" x2="877" y2="94.5"/>
</g><g stroke="#5a0000" stroke-width="1" shape-rendering="crispEdges">
<line x1="335.5" y1="69" x2="335.5" y2="610"/>
<line x1="335" y1="609.5" x2="877" y2="609.5"/>
<line x1="386.5" y1="610" x2="386.5" y2="604"/>
<line x1="335" y1="558.5" x2="341" y2="558.5"/>
<line x1="438.5" y1="610" x2="438.5" y2="604"/>
<line x1="335" y1="506.5" x2="341" y2="506.5"/>
<line x1="489.5" y1="610" x2="489.5" y2="604"/>
<line x1="335" y1="455.5" x2="341" y2="455.5"/>
<line x1="541.5" y1="610" x2="541.5" y2="604"/>
<line x1="335" y1="403.5" x2="341" y2="403.5"/>
<line x1="593.5" y1="610" x2="593.5" y2="604"/>
<line x1="335" y1="352.5" x2="341" y2="352.5"/>
<line x1="644.5" y1="610" x2="644.5" y2="604"/>
<line x1="335" y1="300.5" x2="341" y2="300.5"/>
<line x1="696.5" y1="610" x2="696.5" y2="604"/>
<line x1="335" y1="249.5" x2="341" y2="249.5"/>
<line x1="747.5" y1="610" x2="747.5" y2="604"/>
<line x1="335" y1="197.5" x2="341" y2="197.5"/>
<line x1="799.5" y1="610" x2="799.5" y2="604"/>
<line x1="335" y1="146.5" x2="341" y2="146.5"/>
<line x1="851.5" y1="610" x2="851.5" y2="604"/>
<line x1="335" y1="94.5" x2="341" y2="94.5"/>
</g><g fill="none" stroke-width="1" shape-rendering="crispEdges"><path stroke="#0000ac" d="M877,544L764.8,543.4 689.9,542.3 657.7,541.3 631.9,540.1 611.9,538.7 591.9,536.9 575.8,534.9 558.4,531.9 543.2,528.4 530.7,524.6 524.1,522 518.6,519.4 509.9,514.3 506.5,511.7 502.7,507.8 501,505.3 500.3,502.7 500.3,501.4 500.9,500.1 502.2,498.8 505.1,497.5 511.9,496.3 522.2,495.8 594.5,495.8 745.1,495 877,494.6M450.4,69L450,200.6 449.1,350.8 449.1,422.9 448.6,433.2 447.4,440 446.1,442.9 444.8,444.2 443.6,444.8 442.3,444.8 439.7,444.1 437.1,442.4 433.2,438.6 430.7,435.3 425.5,426.6 422.9,421 420.3,414.4 416.5,402 413,386.9 410,369.4 408,353.4 406.1,333.4 404.8,313.5 403.6,287.8 402.6,255.6 401.4,181 400.9,69"/>
<path stroke="#0025ff" d="M877,561.9L739,561.4 655.1,560.4 619,559.3 591.9,558.1 568.7,556.5 546.8,554.4 526.1,551.7 509.4,548.6 493.9,544.9 478.3,540 465.9,534.9 453.8,528.4 447.8,524.6 442.5,520.7 433.2,512.6 425.4,504 417.8,493.3 411.3,481.8 405.3,467.9 401,455 396.8,438.3 393.2,419.7 390.5,399.7 388.4,377.9 386.8,354.4 385.5,326.4 384.5,291.6 383.4,208 382.9,69M481.7,69L481.8,193.8 482.4,262 483.6,309.7 484.6,329 485.9,345.7 487.6,361.1 489.7,375.3 492.5,388.2 495.5,398.4 499,407.6 503.5,416.5 508.7,424.2 514.3,430.6 521,436.4 528.7,441.6 537.6,446.1 546.8,449.6 557.1,452.6 570,455.3 584.2,457.5 599.6,459.2 616.4,460.4 635.8,461.4 683.5,462.7 751.9,463.2 877,463.4"/>
<path stroke="#009eff" d="M877,572.5L731.2,572.1 643.5,571.1 611.3,570.3 582.9,569.1 558.4,567.7 536,565.7 514.9,563.2 496.4,560 479.7,556.2 464.6,551.6 451.9,546.4 439.7,540.1 429.4,533 420.3,525.1 416.1,520.7 411.9,515.6 404.9,505.3 398.4,493.1 393.2,480.4 389,466.7 385,449.9 381.7,430.6 379.1,410 377.2,388.2 375.7,363.7 374.5,335.4 373.7,301.9 372.6,214.4 372.3,69M507.4,69L507.7,174.5 508.5,238.9 510.1,285.2 511.2,303.2 512.7,319.9 514.6,335.4 516.9,348.3 519.7,360.4 523.1,371.4 526.8,380.4 531.6,389.4 537,397.2 542.9,403.6 549.3,409.2 557.1,414.3 566.1,419 575.1,422.5 585.5,425.6 598.4,428.5 611.3,430.7 626.7,432.6 643.5,434 661.6,435.1 708,436.7 772.5,437.5 877,437.7"/>
<path stroke="#1affe5" d="M877,580.5L724.8,580.2 637.1,579.2 604.8,578.5 575.1,577.3 549.3,575.8 526.1,573.9 505.5,571.4 486.9,568.3 469.9,564.5 455.2,560 442.3,554.8 430.7,548.8 420.3,541.8 411.3,533.9 407.3,529.7 403,524.6 396,514.3 390,502.7 384.8,489.8 380.4,475.2 376.5,458.2 373.4,439.6 370.9,419 368.9,395.9 367.5,370.1 366.3,340.5 365.5,308.4 364.6,220.9 364.3,69M532.5,69L532.9,159.1 533.8,218.3 535.6,262 536.8,280.1 538.4,295.5 540.5,310.9 542.9,323.8 545.7,335.4 549,345.7 552.8,354.7 557.1,362.6 562.2,370.1 567.8,376.6 573.9,382 581.6,387.5 589.8,392 598.9,395.9 610,399.5 621.4,402.3 634.5,404.7 648.7,406.7 664.2,408.2 682.2,409.5 726.1,411.3 785.4,412.3 877,412.7"/>
<path stroke="#97ff68" d="M877,587.2L722.2,586.8 633.2,586 597.1,585.1 568.7,584.1 542.9,582.6 521,580.9 500.3,578.5 479.7,575.2 462.9,571.5 448.1,567 435,561.9 422.9,555.6 413.2,549 404.3,541.3 396.3,532.3 389.2,522 382.9,509.9 377.8,496.9 373.3,482.1 369.6,465.4 366.4,446.1 364,425.5 362.3,404.6 360.7,377.9 359.7,349.5 358.8,313.5 357.9,224.7 357.6,69M559.3,69L559.8,146.2 560.9,200.3 562.9,241.4 564.3,258.2 565.9,272.3 568,286.5 570.3,298.1 573.3,309.7 576.4,318.9 580.2,327.7 584.4,335.4 589.7,343.1 595.4,349.5 601.1,354.7 608.7,360.1 616.4,364.5 625.5,368.4 635.8,372 646.1,374.7 659,377.3 673.2,379.4 687.4,381 704.1,382.3 745.4,384.3 799.6,385.4 877,385.9"/>
<path stroke="#ffeb00" d="M877,592.7L717,592.4 625.5,591.5 590.6,590.7 562.2,589.7 536.4,588.2 514.5,586.5 492.6,583.9 475.2,581.2 457.8,577.4 443.6,573.3 430.4,568.3 424.2,565.4 417.8,561.9 407.4,555.1 398.4,547.2 390.7,538.6 383.7,528.4 377.8,517.3 372.4,504 367.7,488.5 364,471.8 361,453.8 358.4,431.9 356.6,410 355.1,384.3 354,354.7 353.2,319.9 352.3,228.6 352,69M588.4,69L589.1,134.6 590.4,182.2 592.5,218.3 593.9,233.7 595.7,247.9 597.9,260.7 600.4,272.3 603.3,282.6 606.5,291.6 610,299.4 614.3,307.1 619,313.8 624.4,319.9 630.6,325.5 637.1,330.2 644.8,334.7 653.8,338.8 662.9,342.1 673.2,345 684.8,347.5 697.2,349.5 710.6,351.3 726.1,352.7 763.5,354.9 811.2,356.2 877,356.9"/>
<path stroke="#ff6d00" d="M877,597.7L715.8,597.4 624.2,596.6 588,595.8 558.4,594.7 532.6,593.3 509.1,591.5 486.7,588.9 468.1,585.9 451.3,582.2 435.8,577.6 422.4,572.2 411.3,566.4 401,559.3 392.3,551.6 384.5,542.6 377.8,532.4 371.8,520.7 366.8,507.8 362.3,492.6 358.6,475.7 355.7,457.6 353.2,435.8 351.4,412.6 350,386.9 348.9,357.3 348.1,321.2 347.3,229.9 347,69M622.7,69L623.6,123.1 625.2,162.9 627.6,195.1 629.2,209.3 631,220.9 633.3,232.4 635.8,242.6 638.6,251.7 641.6,259.5 645.3,267.2 649.9,274.9 654.8,281.3 659.5,286.5 665.4,291.8 671.9,296.4 678.3,300.1 686.1,303.8 694.6,307.1 704.1,310 714.5,312.4 726.1,314.6 737.7,316.3 751.9,317.9 784.1,320.3 824.1,321.8 877,322.7"/>
<path stroke="#ee0000" d="M877,602.1L710.6,601.8 619,601 585.5,600.2 554.5,599.2 528.7,597.8 505.5,596 483.5,593.5 464.2,590.5 447.4,586.8 432.4,582.5 419.2,577.3 407.4,571.3 397.2,564.5 388.4,556.7 384.2,552.3 380.4,547.6 373.5,537.4 367.4,525.7 362.3,512.5 357.9,497.5 354.3,480.8 351.2,461.5 348.7,439.6 346.9,416.5 345.5,390.7 344.5,359.8 343.8,326.4 342.9,235 342.6,69M664.6,69L665.8,108.9 667.7,139.8 670.3,165.5 671.9,177.1 673.8,187.4 675.9,196.4 678.4,205.4 681,213.1 684.3,220.9 687.5,227.3 691.5,233.7 695.3,238.9 700.3,244.5 705.4,249.2 710.6,253.2 717,257.3 723.6,260.7 731.2,264 739,266.7 748,269.3 757,271.4 767.4,273.3 779,275.1 804.8,277.7 837,279.6 877,280.9"/>
<path stroke="#800000" d="M877,609.5L737.7,609.4 696.4,609.3 686.1,609.1 680.9,608.9 675.8,607.4 672.7,604.4 526.1,604.3 505.5,604.3 500.4,599.2 464.2,599.1 459.1,594.1 443.6,594 438.4,588.9 428.1,588.9 422.9,583.8 412.6,583.7 407.5,578.6 402.3,578.5 386.8,563.2 366.3,542.6 366.2,537.4 361,532.3 361,522 355.9,516.8 355.8,506.5 350.7,501.4 350.7,485.9 345.6,480.8 345.5,444.7 340.4,439.6 340.4,419 340.4,272.8 337.3,269.8 335.8,264.6 335.6,259.5 335.4,249.2 335.3,208 335.2,69M726.4,69L726.9,74.1 727,79.3 727.2,94.7 727.3,115.3 727.4,116.2 731.6,120.5 732.2,125.6 732.4,130.8 732.4,141.1 732.5,141.6 737.2,146.2 737.5,151.4 737.6,156.5 737.7,156.9 742.4,161.7 742.7,166.8 742.8,167.3 747.5,172 747.9,177.1 748,177.3 753,182.2 753.2,182.6 758,187.4 763.2,192.5 763.5,192.8 768.4,197.7 768.6,197.8 773.8,198.2 778.5,202.8 779,203 784.1,203.3 788.9,208 789.3,208.1 794.4,208.2 799.6,208.5 804.3,213.1 804.8,213.2 815.1,213.3 820.2,213.4 825.4,214 829.7,218.3 830.6,218.4 851.2,218.4 866.7,218.6 871.8,218.8 877,219.2"/></g><g fill="none" stroke="#000" stroke-width="5.3" stroke-linejoin="round" stroke-linecap="butt" shape-rendering="crispEdges"><path d="M748.0,522.3C732.0,522.3 715.3,522.4 700.0,522.3C686.1,522.2 673.3,522.1 660.0,522.0C646.7,521.9 633.4,521.8 620.0,521.6C606.4,521.4 591.9,521.0 578.9,520.6C567.1,520.3 555.4,520.1 545.0,519.6C536.0,519.2 526.9,518.6 520.0,518.0C515.1,517.6 511.6,517.3 507.3,516.7C502.9,516.1 498.4,515.3 493.9,514.6C489.4,513.8 485.0,513.1 480.5,512.2C476.0,511.3 471.5,510.3 467.0,509.2C462.5,508.2 458.0,507.1 453.6,505.9C449.1,504.7 444.6,503.5 440.2,501.8C435.7,500.1 431.2,497.7 426.8,495.5C422.3,493.3 417.3,491.1 413.4,488.4C410.0,486.0 406.6,483.3 404.5,480.3C402.7,477.7 401.0,474.5 400.9,472.0C400.8,470.1 401.7,468.3 402.8,466.8C404.0,465.2 406.2,464.2 408.3,463.0C410.9,461.6 413.8,460.6 417.4,459.2C422.4,457.3 429.2,455.2 435.7,452.8C443.3,450.0 452.3,446.2 460.0,443.0C467.0,440.1 473.5,437.4 480.0,434.6C486.2,431.9 493.4,429.2 498.0,426.4C501.2,424.5 503.1,422.7 505.7,420.5C508.6,418.1 512.9,414.4 514.8,412.5C515.7,411.6 516.4,411.2 516.8,410.3C517.2,409.4 517.6,408.2 517.4,407.2C517.2,406.1 516.4,404.8 515.5,403.8C514.5,402.7 513.0,401.8 511.5,401.0C509.8,400.1 508.2,399.6 505.7,398.8C501.3,397.3 494.1,395.3 487.4,393.3C479.2,390.8 466.9,387.2 460.0,384.9C455.8,383.5 454.3,382.9 450.0,381.4C442.0,378.7 425.7,373.3 415.7,370.1C407.9,367.6 401.2,365.4 395.0,363.6C390.0,362.1 385.9,361.1 381.3,359.8"/><path d="M381.3,359.8C385.9,363.0 389.9,366.1 395.0,369.3C401.1,373.1 407.9,376.7 415.7,380.8C425.6,386.1 439.0,392.2 450.0,398.0C460.4,403.5 471.3,409.4 480.0,414.6C486.8,418.7 492.2,422.2 498.0,426.2C503.6,430.0 509.5,434.0 514.3,438.0C518.6,441.6 522.2,445.3 525.7,448.9C529.0,452.3 531.9,455.5 534.9,459.1C538.0,462.8 541.0,466.7 544.0,470.6C547.1,474.6 549.3,477.8 553.1,483.1C559.5,492.2 571.8,511.2 578.9,520.3C583.3,525.9 586.1,528.6 590.2,533.3C595.0,538.9 602.1,547.1 605.9,551.6C608.1,554.2 609.5,555.9 611.0,557.8C612.2,559.3 613.1,560.8 614.0,561.8C614.7,562.6 615.3,563.5 615.9,563.6C616.5,563.7 617.2,563.1 617.6,562.5C618.0,561.9 618.1,560.8 618.2,559.8C618.3,558.7 618.1,557.7 617.9,556.1C617.5,553.0 616.6,547.3 615.6,542.4C614.5,536.7 613.1,530.9 611.5,524.1C609.5,515.5 606.1,505.0 604.4,495.0C602.6,484.5 601.6,469.1 601.3,462.4C601.2,459.4 601.1,457.9 601.4,456.0C601.7,454.5 602.1,453.1 602.8,452.0C603.4,451.1 604.2,450.3 605.0,449.8C605.8,449.3 606.6,449.0 607.5,449.0C608.5,449.0 609.5,449.3 610.5,449.8C611.6,450.3 612.3,451.1 613.5,452.1C615.2,453.5 617.9,455.8 619.8,457.6C621.4,459.2 622.1,460.0 624.1,462.4C629.1,468.4 640.7,483.6 649.2,495.0C658.4,507.2 669.3,522.9 677.3,533.3C682.9,540.6 688.5,547.0 692.1,551.6C694.2,554.3 695.6,556.2 697.1,558.1C698.3,559.6 699.4,560.7 700.4,561.9C701.3,562.9 702.0,564.0 702.8,564.7C703.4,565.2 704.2,566.0 704.6,565.9C705.0,565.8 705.2,564.6 705.4,563.9C705.6,563.1 705.5,562.4 705.5,561.4C705.4,560.0 705.3,558.3 704.9,556.1C704.3,552.6 702.8,547.0 701.6,542.4C700.4,537.8 699.5,534.3 697.9,528.7C695.4,519.9 689.7,504.4 687.4,495.0C685.8,488.3 685.3,483.1 684.3,477.7C683.5,473.1 682.4,467.9 681.9,464.7C681.6,462.8 681.4,461.6 681.4,460.2C681.4,459.0 681.5,457.7 681.9,456.7C682.2,455.8 682.8,455.0 683.3,454.4C683.8,453.9 684.3,453.4 684.9,453.1C685.4,452.8 685.9,452.7 686.5,452.7C687.2,452.7 688.2,452.9 689.0,453.2C690.0,453.6 690.9,454.4 692.0,455.2C693.4,456.2 695.1,457.8 696.5,459.0C697.8,460.2 698.5,460.6 700.2,462.4C705.0,467.6 716.0,482.6 725.5,495.0C738.1,511.3 761.7,542.4 769.1,552.0C771.6,555.2 772.6,556.6 774.1,558.5C775.3,560.0 776.4,561.1 777.4,562.3C778.3,563.3 779.0,564.4 779.8,565.1C780.4,565.6 781.2,566.4 781.6,566.3C782.0,566.2 782.2,565.0 782.4,564.3C782.6,563.5 782.5,562.8 782.5,561.8C782.4,560.4 782.3,558.7 781.9,556.5C781.3,553.0 779.8,547.4 778.6,542.8C777.4,538.2 776.4,534.5 774.9,529.1C772.7,521.2 768.7,508.6 766.7,500.0C765.1,493.3 764.4,488.1 763.3,482.0C762.1,475.7 760.1,467.2 759.8,462.9C759.6,460.7 759.6,459.4 759.9,458.0C760.2,456.8 760.6,455.7 761.3,455.0C762.0,454.3 763.2,453.8 764.2,453.7C765.3,453.6 766.4,454.0 767.5,454.6C769.0,455.4 770.5,456.5 772.4,458.4C776.1,462.0 781.9,469.9 787.0,475.8C792.4,482.1 797.8,487.6 804.0,495.1C812.1,505.0 823.2,519.9 831.2,530.2C837.5,538.3 844.1,546.9 848.1,552.0C850.3,554.8 851.6,556.6 853.1,558.5C854.3,560.0 855.4,561.1 856.4,562.3C857.3,563.3 858.0,564.4 858.8,565.1C859.4,565.6 860.2,566.4 860.6,566.3C861.0,566.2 861.2,565.0 861.4,564.3C861.6,563.5 861.5,562.8 861.5,561.8C861.4,560.4 861.3,558.7 860.9,556.5C860.3,553.0 858.8,547.4 857.6,542.8C856.4,538.2 855.3,534.5 853.9,529.1C851.8,521.2 848.4,508.6 846.5,500.0C845.0,493.3 844.1,488.1 843.0,482.0C841.8,475.6 839.9,466.7 839.5,462.5C839.4,460.5 839.4,459.3 839.7,458.0C840.0,456.9 840.3,455.9 841.0,455.2C841.7,454.5 842.8,453.9 843.8,453.8C844.8,453.7 845.9,454.1 847.0,454.6C848.4,455.3 849.8,456.5 851.5,458.0C854.1,460.3 857.2,463.7 860.7,467.4C865.7,472.6 872.4,480.1 878.3,486.5"/></g><g font-family="Liberation Sans, sans-serif" font-size="11.8" fill="#262626">
<text x="335.2" y="629" text-anchor="middle">0.4</text>
<text x="329" y="614.8" text-anchor="end">0.4</text>
<text x="386.8" y="629" text-anchor="middle">0.6</text>
<text x="329" y="563.3" text-anchor="end">0.6</text>
<text x="438.4" y="629" text-anchor="middle">0.8</text>
<text x="329" y="511.8" text-anchor="end">0.8</text>
<text x="490" y="629" text-anchor="middle">1</text>
<text x="329" y="460.4" text-anchor="end">1</text>
<text x="541.6" y="629" text-anchor="middle">1.2</text>
<text x="329" y="408.9" text-anchor="end">1.2</text>
<text x="593.2" y="629" text-anchor="middle">1.4</text>
<text x="329" y="357.4" text-anchor="end">1.4</text>
<text x="644.8" y="629" text-anchor="middle">1.6</text>
<text x="329" y="305.9" text-anchor="end">1.6</text>
<text x="696.4" y="629" text-anchor="middle">1.8</text>
<text x="329" y="254.5" text-anchor="end">1.8</text>
<text x="748" y="629" text-anchor="middle">2</text>
<text x="329" y="203" text-anchor="end">2</text>
<text x="799.6" y="629" text-anchor="middle">2.2</text>
<text x="329" y="151.5" text-anchor="end">2.2</text>
<text x="851.2" y="629" text-anchor="middle">2.4</text>
<text x="329" y="100" text-anchor="end">2.4</text>
</g>
<text x="606" y="647" text-anchor="middle" font-family="Liberation Serif, serif" font-size="14.6" fill="#262626" textLength="146" lengthAdjust="spacing">A-B bond distance (Å)</text>
<text transform="translate(302.5,340) rotate(-90)" text-anchor="middle" font-family="Liberation Serif, serif" font-size="14.6" fill="#262626" textLength="148" lengthAdjust="spacing">B-C bond distance (Å)</text>
</svg>
</body></html>
